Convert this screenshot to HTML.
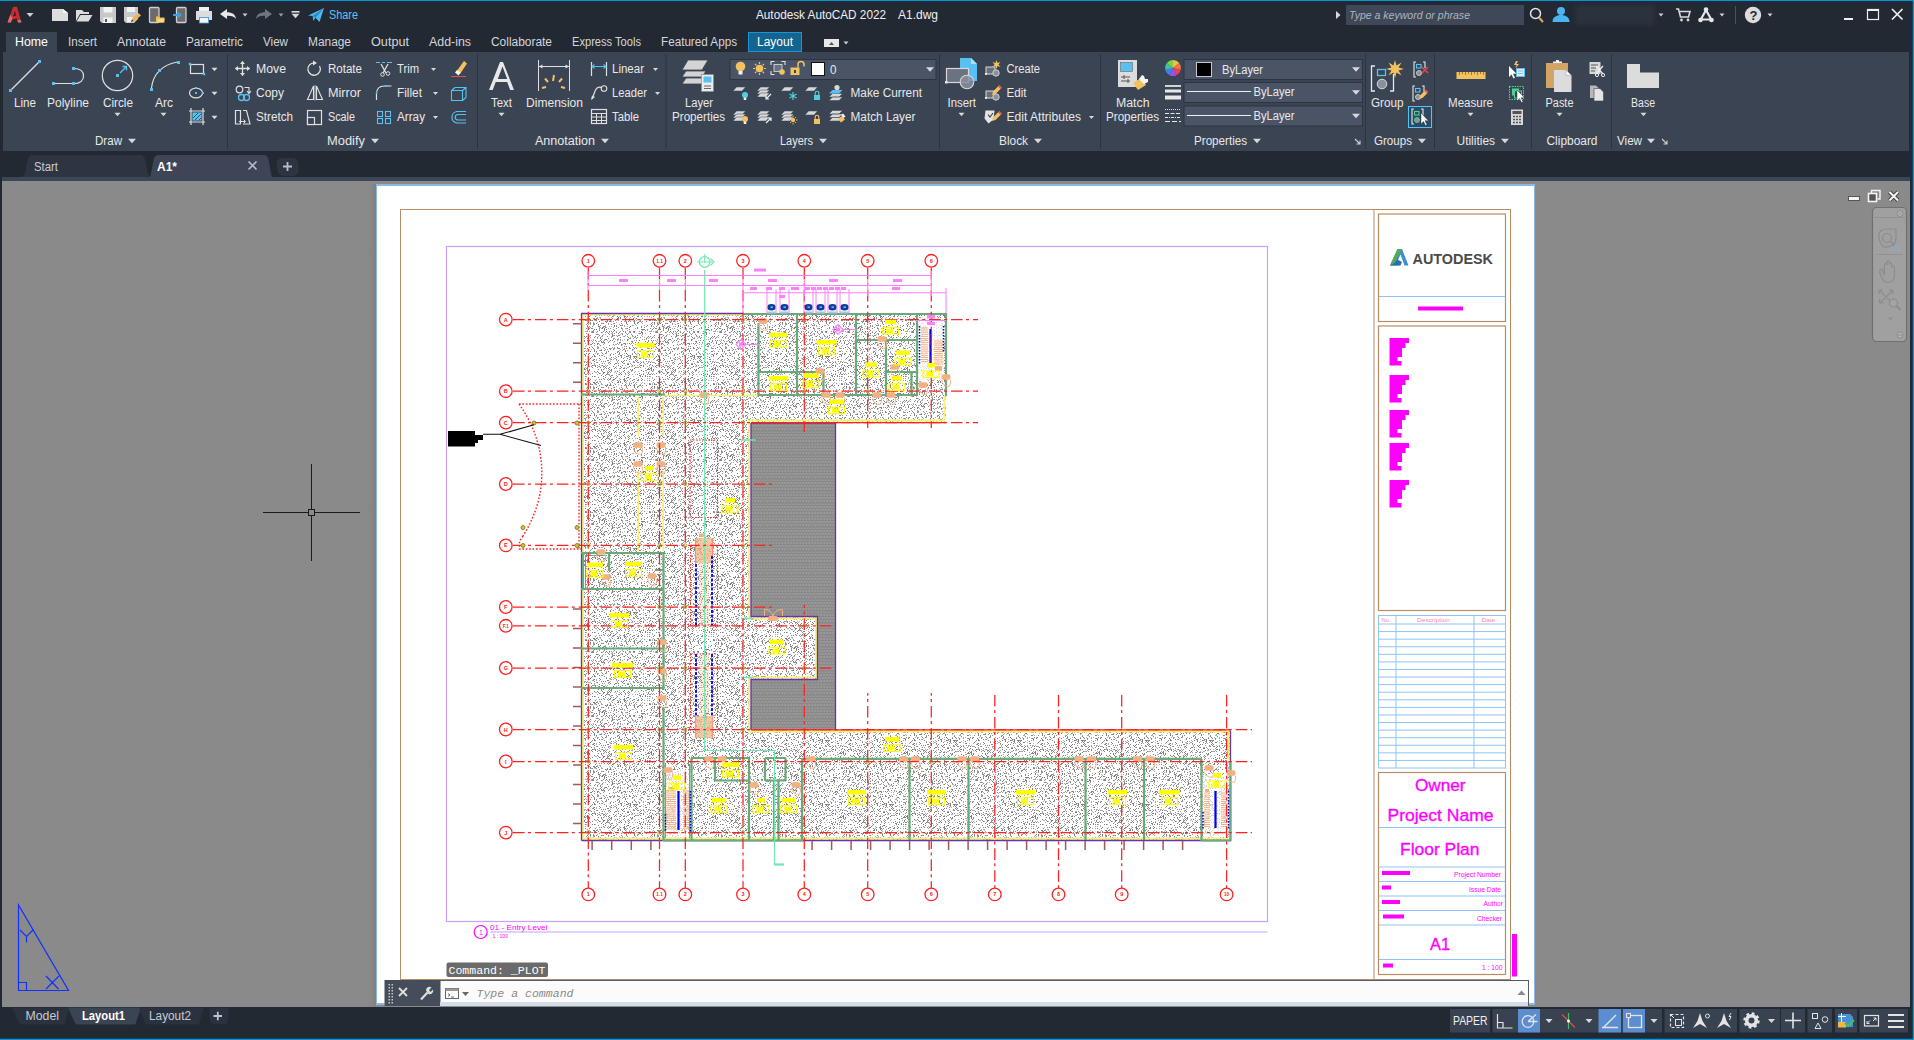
<!DOCTYPE html>
<html><head><meta charset="utf-8"><title>Autodesk AutoCAD 2022 A1.dwg</title>
<style>
*{box-sizing:border-box;margin:0;padding:0}
html,body{width:1914px;height:1040px;overflow:hidden;background:#222933;font-family:"Liberation Sans",sans-serif;font-size:12px;color:#e4e4e4}
.abs{position:absolute}
#root{position:relative;width:1914px;height:1040px;overflow:hidden;background:#222933}
#topline{left:0;top:0;width:1914px;height:1px;background:#0696d7}
#rightline{left:1913px;top:0;width:1px;height:1040px;background:#0696d7;box-shadow:-1px 0 0 rgba(6,150,215,0.25)}
#botline{left:0;top:1039px;width:1914px;height:1px;background:#0696d7;box-shadow:0 -1px 0 rgba(6,150,215,0.25)}
#ribbon{left:3px;top:52px;width:1906px;height:99px;background:#3b4453}
#hometab{left:6px;top:32px;width:51px;height:21px;background:#3b4453}
.tab{position:absolute;top:35px;font-size:12px;color:#d8d8d8;white-space:nowrap}
.t{position:absolute;white-space:nowrap;color:#e6e6e6;font-size:12px;line-height:14px}
.sep{position:absolute;top:54px;width:1px;height:95px;background:#2c3340}
#strip{left:2px;top:177px;width:1908px;height:4px;background:#3d4556}
#canvas{left:2px;top:181px;width:1908px;height:826px;background:#8a8a8a;overflow:hidden}
#status{left:0;top:1007px;width:1914px;height:31px;background:#222933}
svg{position:absolute;overflow:visible}
</style></head><body><div id="root">
<div class="abs" id="topline"></div>
<svg class="abs" style="left:0;top:0" width="1914" height="181" viewBox="0 0 1914 181" font-family="Liberation Sans, sans-serif">
<rect x="0" y="0" width="1914" height="181" fill="#222933"/>
<rect x="0" y="0" width="1914" height="1" fill="#0696d7"/>
<rect x="3" y="52" width="1906" height="99" fill="#3b4453"/>
<rect x="6" y="32" width="51" height="21" fill="#3b4453"/>
<rect x="2" y="177" width="1908" height="4" fill="#3d4556"/>
<path d="M7.500 22.500L13.200 6.800H17L21.400 22.500H18L16.900 18.600L12.100 19.400L10.900 22.500ZM13.100 16.300L16.200 15.700L15 10.800Z" fill="#cc2a2c" fill-rule="evenodd"/>
<path d="M7.500 22.500L10.300 14.800L12.600 18L10.900 22.500Z" fill="#e06a6a"/><path d="M18 22.500L17.300 20H20.700L21.400 22.500Z" fill="#e06a6a"/>
<path d="M26.5 13.0h7l-3.5 4z" fill="#cfcfcf"/>
<path d="M52 9h11l5 4v8H52z" fill="#dcdcdc"/><path d="M63 9v4h5z" fill="#f8f8f8"/>
<path d="M76 21V10h6l2 2h5v2H80l-4 7z" fill="#dcdcdc"/><path d="M80.5 15H92.5l-4 6.5H76.5z" fill="#dcdcdc"/>
<path d="M100 7h16v16H102l-2-2z" fill="#c8c8c8"/><rect x="103.5" y="7" width="9" height="5.5" fill="#f2f2f2"/><rect x="103.5" y="17.5" width="9" height="5.5" fill="#f2f2f2"/><rect x="105" y="19" width="2" height="3" fill="#555"/>
<path d="M124 7h14v12l-4 4H126l-2-2z" fill="#c8c8c8"/><rect x="127" y="7" width="8" height="5" fill="#f2f2f2"/><rect x="127" y="17" width="6" height="5" fill="#f2f2f2"/><path d="M131 22l1.5-4 6-5 2.5 2.5-6 5z" fill="#f0b450"/><path d="M131 22l1-2.5 1.5 1.5z" fill="#333"/>
<rect x="149.500" y="7.500" width="9.500" height="15" rx="1" fill="#6c6c6c" stroke="#cfcfcf" stroke-width="1.300"/><path d="M156 22.500v-6h3l1 1h4.500v5z" fill="#f0c060"/><path d="M157 22.500l1.500-3.500h6l-1 3.500z" fill="#f8d888"/>
<rect x="176.500" y="7.500" width="9.500" height="15" rx="1" fill="#6c6c6c" stroke="#cfcfcf" stroke-width="1.300"/><path d="M173 14h5v-2.5l4 3.5-4 3.5V16h-5z" fill="#3aa0e0"/>
<rect x="199" y="7" width="10" height="5" fill="#f0f0f0"/><path d="M196 11h16v9h-3v-3h-10v3h-3z" fill="#dcdcdc"/><rect x="199.5" y="17.5" width="9" height="5.5" fill="#f4f4f4" stroke="#4aa8e8" stroke-width="0.8"/>
<path d="M220 14l7-5v3.2c5 0 8.5 2 9 6.8-2-2.6-4.5-3.4-9-3.2V19z" fill="#e8e8e8"/>
<path d="M242.5 13.5h5l-2.5 3z" fill="#cfcfcf"/>
<path d="M272 14l-7-5v3.2c-5 0-8.5 2-9 6.8 2-2.6 4.5-3.4 9-3.2V19z" fill="#6e7582"/>
<path d="M278.5 13.5h5l-2.5 3z" fill="#9aa0aa"/>
<rect x="291.5" y="11" width="8" height="1.6" fill="#d8d8d8"/>
<path d="M291.5 13.75h8l-4.0 4.5z" fill="#d8d8d8"/>
<path d="M308 15.5L324 8l-4.5 14-4-4.2-2.2 3.2-.6-5z" fill="#4cb8ee"/><path d="M312.7 16L324 8l-8.5 9.8z" fill="#2a88c0"/>
<text x="329" y="19" font-size="12" fill="#5fc3f3" textLength="29" lengthAdjust="spacingAndGlyphs" >Share</text>
<text x="756" y="19" font-size="12" fill="#f0f0f0" textLength="130" lengthAdjust="spacingAndGlyphs" >Autodesk AutoCAD 2022</text>
<text x="898" y="19" font-size="12" fill="#f0f0f0" textLength="40" lengthAdjust="spacingAndGlyphs" >A1.dwg</text>
<path d="M1336 11l4.5 4-4.5 4z" fill="#d8d8d8"/>
<rect x="1346" y="5" width="178" height="20" fill="#3f4859"/>
<text x="1349" y="19" font-size="11" fill="#aeb4be" textLength="121" lengthAdjust="spacingAndGlyphs" font-style="italic">Type a keyword or phrase</text>
<circle cx="1535.5" cy="13.5" r="5" fill="none" stroke="#e6e6e6" stroke-width="1.5"/><path d="M1539 17.5l4 4.5" stroke="#e0a860" stroke-width="2"/>
<circle cx="1561" cy="11" r="4" fill="#4cb4f0"/><path d="M1552.500 22c0-5 4-7 8.500-7s8.500 2 8.500 7z" fill="#4cb4f0"/>
<defs><filter id="bl"><feGaussianBlur stdDeviation="2.5"/></filter></defs><rect x="1576" y="5" width="78" height="20" fill="#2c333d" filter="url(#bl)"/>
<path d="M1658.5 13.5h5l-2.5 3z" fill="#cfcfcf"/>
<path d="M1676 9h2.5l2 8h8l1.500-5.500h-10" fill="none" stroke="#d8d8d8" stroke-width="1.6"/><circle cx="1681.500" cy="20" r="1.4" fill="#d8d8d8"/><circle cx="1688" cy="20" r="1.4" fill="#d8d8d8"/>
<path d="M1706 10l-5.500 10M1706 10l5.500 10M1701 19.500h10" stroke="#e6e6e6" stroke-width="2.2" fill="none"/><circle cx="1706" cy="9.500" r="2.3" fill="#e6e6e6"/><circle cx="1700.500" cy="20" r="2.3" fill="#e6e6e6"/><circle cx="1711.500" cy="20" r="2.3" fill="#e6e6e6"/>
<path d="M1719.5 13.5h5l-2.5 3z" fill="#cfcfcf"/>
<rect x="1735" y="6" width="1" height="18" fill="#4a5160"/>
<circle cx="1753" cy="15" r="8.200" fill="#dcdcdc"/>
<text x="1749.6" y="19.5" font-size="13" fill="#222933" font-weight="bold">?</text>
<path d="M1767.5 13.5h5l-2.5 3z" fill="#cfcfcf"/>
<rect x="1844" y="18" width="9" height="2" fill="#f0f0f0"/>
<rect x="1867.500" y="9.500" width="11" height="10" fill="none" stroke="#f0f0f0" stroke-width="1.2"/><rect x="1867" y="9" width="12" height="2" fill="#f0f0f0"/>
<path d="M1892 9l10.500 10.500M1902.500 9L1892 19.500" stroke="#f0f0f0" stroke-width="1.7"/>
<text x="15" y="46" font-size="12" fill="#ffffff" textLength="33" lengthAdjust="spacingAndGlyphs" >Home</text>
<text x="68" y="46" font-size="12" fill="#d4d6da" textLength="29" lengthAdjust="spacingAndGlyphs" >Insert</text>
<text x="117" y="46" font-size="12" fill="#d4d6da" textLength="49" lengthAdjust="spacingAndGlyphs" >Annotate</text>
<text x="186" y="46" font-size="12" fill="#d4d6da" textLength="57" lengthAdjust="spacingAndGlyphs" >Parametric</text>
<text x="263" y="46" font-size="12" fill="#d4d6da" textLength="25" lengthAdjust="spacingAndGlyphs" >View</text>
<text x="308" y="46" font-size="12" fill="#d4d6da" textLength="43" lengthAdjust="spacingAndGlyphs" >Manage</text>
<text x="371" y="46" font-size="12" fill="#d4d6da" textLength="38" lengthAdjust="spacingAndGlyphs" >Output</text>
<text x="429" y="46" font-size="12" fill="#d4d6da" textLength="42" lengthAdjust="spacingAndGlyphs" >Add-ins</text>
<text x="491" y="46" font-size="12" fill="#d4d6da" textLength="61" lengthAdjust="spacingAndGlyphs" >Collaborate</text>
<text x="572" y="46" font-size="12" fill="#d4d6da" textLength="69" lengthAdjust="spacingAndGlyphs" >Express Tools</text>
<text x="661" y="46" font-size="12" fill="#d4d6da" textLength="76" lengthAdjust="spacingAndGlyphs" >Featured Apps</text>
<rect x="748.500" y="32.500" width="53" height="19" fill="#13648f" stroke="#1d94d6" stroke-width="1"/>
<text x="757" y="46" font-size="12" fill="#ffffff" textLength="36" lengthAdjust="spacingAndGlyphs" >Layout</text>
<rect x="824" y="39" width="15" height="8" fill="#e8e8e8"/><path d="M829 45l2.500-3 2.500 3z" fill="#555"/>
<path d="M843.5 41.5h5l-2.5 3z" fill="#cfcfcf"/>
<rect x="227.0" y="54" width="1" height="95" fill="#2d3441"/>
<rect x="477.0" y="54" width="1" height="95" fill="#2d3441"/>
<rect x="665.5" y="54" width="1" height="95" fill="#2d3441"/>
<rect x="939.0" y="54" width="1" height="95" fill="#2d3441"/>
<rect x="1100.0" y="54" width="1" height="95" fill="#2d3441"/>
<rect x="1365.0" y="54" width="1" height="95" fill="#2d3441"/>
<rect x="1434.0" y="54" width="1" height="95" fill="#2d3441"/>
<rect x="1531.0" y="54" width="1" height="95" fill="#2d3441"/>
<rect x="1611.0" y="54" width="1" height="95" fill="#2d3441"/>
<text x="95" y="145" font-size="12" fill="#e8e8e8" textLength="27" lengthAdjust="spacingAndGlyphs" >Draw</text>
<path d="M128.0 138.75h8l-4.0 4.5z" fill="#d8d8d8"/>
<text x="327" y="145" font-size="12" fill="#e8e8e8" textLength="38" lengthAdjust="spacingAndGlyphs" >Modify</text>
<path d="M371.0 138.75h8l-4.0 4.5z" fill="#d8d8d8"/>
<text x="535" y="145" font-size="12" fill="#e8e8e8" textLength="60" lengthAdjust="spacingAndGlyphs" >Annotation</text>
<path d="M601.0 138.75h8l-4.0 4.5z" fill="#d8d8d8"/>
<text x="780" y="145" font-size="12" fill="#e8e8e8" textLength="33" lengthAdjust="spacingAndGlyphs" >Layers</text>
<path d="M819.0 138.75h8l-4.0 4.5z" fill="#d8d8d8"/>
<text x="999" y="145" font-size="12" fill="#e8e8e8" textLength="29" lengthAdjust="spacingAndGlyphs" >Block</text>
<path d="M1034.0 138.75h8l-4.0 4.5z" fill="#d8d8d8"/>
<text x="1194" y="145" font-size="12" fill="#e8e8e8" textLength="53" lengthAdjust="spacingAndGlyphs" >Properties</text>
<path d="M1253.0 138.75h8l-4.0 4.5z" fill="#d8d8d8"/>
<text x="1374" y="145" font-size="12" fill="#e8e8e8" textLength="38" lengthAdjust="spacingAndGlyphs" >Groups</text>
<path d="M1418.0 138.75h8l-4.0 4.5z" fill="#d8d8d8"/>
<text x="1456.5" y="145" font-size="12" fill="#e8e8e8" textLength="38.5" lengthAdjust="spacingAndGlyphs" >Utilities</text>
<path d="M1501.0 138.75h8l-4.0 4.5z" fill="#d8d8d8"/>
<text x="1546.5" y="145" font-size="12" fill="#e8e8e8" textLength="51" lengthAdjust="spacingAndGlyphs" >Clipboard</text>
<text x="1617" y="145" font-size="12" fill="#e8e8e8" textLength="25" lengthAdjust="spacingAndGlyphs" >View</text>
<path d="M1647.0 138.75h8l-4.0 4.5z" fill="#d8d8d8"/>
<path d="M1355 139l5 5M1360 140.500v3.500h-3.500" stroke="#d0d0d0" stroke-width="1.1" fill="none"/>
<path d="M1662 139l5 5M1667 140.500v3.500h-3.500" stroke="#d0d0d0" stroke-width="1.1" fill="none"/>
<path d="M11 90L39 62" stroke="#e0e0e0" stroke-width="1.2"/>
<rect x="9.0" y="89.0" width="3" height="3" fill="#58c1f2"/>
<rect x="38.0" y="60.0" width="3" height="3" fill="#58c1f2"/>
<text x="14" y="107" font-size="12" fill="#e8e8e8" textLength="22" lengthAdjust="spacingAndGlyphs" >Line</text>
<path d="M54 83.500H73M74 68.500c6 0 9.500 3 9.500 7.500s-3.500 7.500-9.500 7.500" stroke="#e0e0e0" stroke-width="1.2" fill="none"/>
<rect x="52.0" y="82.0" width="3" height="3" fill="#58c1f2"/>
<rect x="72.0" y="82.0" width="3" height="3" fill="#58c1f2"/>
<rect x="72.0" y="67.0" width="3" height="3" fill="#58c1f2"/>
<text x="47" y="107" font-size="12" fill="#e8e8e8" textLength="42" lengthAdjust="spacingAndGlyphs" >Polyline</text>
<circle cx="117.500" cy="75.500" r="15.200" fill="none" stroke="#e0e0e0" stroke-width="1.2"/>
<rect x="116.0" y="74.0" width="3" height="3" fill="#58c1f2"/>
<path d="M120 73l6-6M122.500 66.500h4v4" stroke="#58c1f2" stroke-width="1.3" fill="none"/>
<text x="103" y="107" font-size="12" fill="#e8e8e8" textLength="30" lengthAdjust="spacingAndGlyphs" >Circle</text>
<path d="M114.5 112.75h6l-3.0 3.5z" fill="#d8d8d8"/>
<path d="M151.500 88c1.500-14 11-23.500 26-26" stroke="#e0e0e0" stroke-width="1.2" fill="none"/>
<rect x="150.0" y="88.0" width="3" height="3" fill="#58c1f2"/>
<rect x="158.0" y="69.0" width="3" height="3" fill="#58c1f2"/>
<rect x="177.0" y="61.0" width="3" height="3" fill="#58c1f2"/>
<text x="155" y="107" font-size="12" fill="#e8e8e8" textLength="18" lengthAdjust="spacingAndGlyphs" >Arc</text>
<path d="M160.5 112.75h6l-3.0 3.5z" fill="#d8d8d8"/>
<rect x="190.500" y="64.500" width="13" height="9" fill="none" stroke="#e0e0e0" stroke-width="1.2"/>
<rect x="188.8" y="62.8" width="2.4" height="2.4" fill="#58c1f2"/>
<rect x="202.8" y="72.8" width="2.4" height="2.4" fill="#58c1f2"/>
<path d="M211.5 67.75h6l-3.0 3.5z" fill="#d8d8d8"/>
<ellipse cx="196" cy="93" rx="6.500" ry="4.800" fill="none" stroke="#e0e0e0" stroke-width="1.2"/>
<rect x="195.0" y="87.0" width="2" height="2" fill="#58c1f2"/>
<rect x="195.0" y="92.0" width="2" height="2" fill="#58c1f2"/>
<rect x="202.0" y="92.0" width="2" height="2" fill="#58c1f2"/>
<path d="M211.5 91.75h6l-3.0 3.5z" fill="#d8d8d8"/>
<path d="M191 108v17M203 108v17M189 111h16M189 122h16" stroke="#e0e0e0" stroke-width="1.2"/><rect x="192.500" y="112.500" width="9" height="8" fill="#58c1f2"/><path d="M193 118l5-5M195 120l6-6M198.500 120.500l3-3" stroke="#3b4453" stroke-width="0.9"/>
<path d="M211.5 115.75h6l-3.0 3.5z" fill="#d8d8d8"/>
<path d="M242.500 61.500v14M235.500 68.500h14" stroke="#e0e0e0" stroke-width="1.3"/><path d="M240 64l2.500-3 2.500 3zM240 73l2.500 3 2.500-3zM238 66l-3 2.500 3 2.500zM247 66l3 2.500-3 2.500z" fill="#e0e0e0"/>
<text x="256" y="73" font-size="12" fill="#e8e8e8" textLength="30" lengthAdjust="spacingAndGlyphs" >Move</text>
<circle cx="239.500" cy="89.500" r="3.300" fill="none" stroke="#e0e0e0" stroke-width="1.2"/><circle cx="241.500" cy="97.500" r="3" fill="none" stroke="#58c1f2" stroke-width="1.3"/><circle cx="246.500" cy="97.500" r="3" fill="none" stroke="#58c1f2" stroke-width="1.3"/><path d="M244.500 87.500h4.500v5M247 91l2 2.500 2-2.500" stroke="#e0e0e0" stroke-width="1.1" fill="none"/>
<text x="256" y="97" font-size="12" fill="#e8e8e8" textLength="28" lengthAdjust="spacingAndGlyphs" >Copy</text>
<path d="M235.500 110.500h5v13.500h-5zM243 110.500h3.500l3.500 13.500h-7" stroke="#e0e0e0" stroke-width="1.2" fill="none"/><path d="M239 121.500h6M243.500 119.500l2 2-2 2" stroke="#e0e0e0" stroke-width="1" fill="none"/>
<text x="256" y="121" font-size="12" fill="#e8e8e8" textLength="37" lengthAdjust="spacingAndGlyphs" >Stretch</text>
<path d="M319.500 66a6.200 6.200 0 1 1-5.500-3.200" stroke="#e0e0e0" stroke-width="1.3" fill="none"/><path d="M313 60.500l4 2.500-4 2.500z" fill="#e0e0e0"/>
<text x="328" y="73" font-size="12" fill="#e8e8e8" textLength="34" lengthAdjust="spacingAndGlyphs" >Rotate</text>
<path d="M313.500 86l-6 13.500h6zM316.500 86l6 13.500h-6z" stroke="#e0e0e0" stroke-width="1.1" fill="none"/><path d="M315 85v15.500" stroke="#e0e0e0" stroke-width="0.8"/>
<text x="328" y="97" font-size="12" fill="#e8e8e8" textLength="33" lengthAdjust="spacingAndGlyphs" >Mirror</text>
<rect x="307.500" y="110.500" width="14" height="14" fill="none" stroke="#e0e0e0" stroke-width="1.2"/><rect x="307.500" y="117.500" width="7" height="7" fill="#3b4453" stroke="#e0e0e0" stroke-width="1.2"/>
<text x="328" y="121" font-size="12" fill="#e8e8e8" textLength="27" lengthAdjust="spacingAndGlyphs" >Scale</text>
<path d="M376 62.500h4M382 62.500h3M387 62.500h5" stroke="#58c1f2" stroke-width="1.2"/><path d="M381 64l5 9M388 64l-5 9" stroke="#e0e0e0" stroke-width="1.3"/><circle cx="382.500" cy="74.500" r="1.800" fill="none" stroke="#e0e0e0" stroke-width="1"/><circle cx="388" cy="73.500" r="1.800" fill="none" stroke="#e0e0e0" stroke-width="1"/>
<text x="397" y="73" font-size="12" fill="#e8e8e8" textLength="22" lengthAdjust="spacingAndGlyphs" >Trim</text>
<path d="M431.0 68.0h5l-2.5 3z" fill="#d8d8d8"/>
<path d="M376.500 100V94c0-5 3-8 8-8h7" stroke="#e0e0e0" stroke-width="1.2" fill="none"/><path d="M376.500 94v-2M384.500 86h3" stroke="#58c1f2" stroke-width="1.4"/>
<text x="397" y="97" font-size="12" fill="#e8e8e8" textLength="25" lengthAdjust="spacingAndGlyphs" >Fillet</text>
<path d="M433.0 92.0h5l-2.5 3z" fill="#d8d8d8"/>
<rect x="377.5" y="111.5" width="5" height="5" fill="none" stroke="#58c1f2" stroke-width="1.1"/>
<rect x="377.5" y="118.5" width="5" height="5" fill="none" stroke="#58c1f2" stroke-width="1.1"/>
<rect x="385.5" y="111.5" width="5" height="5" fill="none" stroke="#58c1f2" stroke-width="1.1"/>
<rect x="385.5" y="118.5" width="5" height="5" fill="none" stroke="#58c1f2" stroke-width="1.1"/>
<text x="397" y="121" font-size="12" fill="#e8e8e8" textLength="28" lengthAdjust="spacingAndGlyphs" >Array</text>
<path d="M433.0 116.0h5l-2.5 3z" fill="#d8d8d8"/>
<path d="M456 72l8-11 3 2.500-7 10.500z" fill="#f2c261"/><path d="M455 72.500l2-2.500 3.500 2.500-2 3z" fill="#f4f4f4"/><path d="M451 76.500h15" stroke="#e05050" stroke-width="1"/>
<path d="M451.500 90.500h11v10h-11zM455 87.500h11v10M451.500 90.500l3.500-3M462.500 90.500l3.500-3M462.500 100.500l3.500-3" stroke="#58c1f2" stroke-width="1.1" fill="none"/>
<path d="M466 111.500h-9a5.800 5.800 0 0 0 0 11.500h9M466 114.500h-8.500a2.800 2.800 0 0 0 0 5.500h8.500" stroke="#58c1f2" stroke-width="1.2" fill="none"/>
<path d="M489 90l11-28h3l11 28h-3.800l-3-8h-11.500l-3 8zM497.800 79h9.400l-4.700-12.500z" fill="#e8e8e8"/>
<text x="491" y="107" font-size="12" fill="#e8e8e8" textLength="21" lengthAdjust="spacingAndGlyphs" >Text</text>
<path d="M498.5 112.75h6l-3.0 3.5z" fill="#d8d8d8"/>
<path d="M538.500 60v31M569.500 60v31M539 66.500h30" stroke="#e0e0e0" stroke-width="1"/><path d="M539 66.500l3.500-2v4zM569 66.500l-3.500-2v4z" fill="#e0e0e0"/>
<path d="M553 81l1-6M548 82l-3-3.500M559 82l3-3.500M546 87l-4 1M561 87l4 1" stroke="#f2c261" stroke-width="2"/>
<text x="526" y="107" font-size="12" fill="#e8e8e8" textLength="57" lengthAdjust="spacingAndGlyphs" >Dimension</text>
<path d="M591.500 62v14M606.500 62v14" stroke="#e0e0e0" stroke-width="1.2"/><path d="M592 66.500h14M594.500 64.500l-2.500 2 2.500 2M603.500 64.500l2.500 2-2.500 2" stroke="#58c1f2" stroke-width="1.1" fill="none"/>
<text x="612" y="73" font-size="12" fill="#e8e8e8" textLength="32" lengthAdjust="spacingAndGlyphs" >Linear</text>
<path d="M653.0 68.0h5l-2.5 3z" fill="#d8d8d8"/>
<path d="M592 99l3.500-9c1.500-3 4-3.500 6.500-2" stroke="#e0e0e0" stroke-width="1.200" fill="none"/><path d="M591 100l1-4.500 3 1.500z" fill="#e0e0e0"/><circle cx="604" cy="88.500" r="2.800" fill="none" stroke="#e0e0e0" stroke-width="1.100"/>
<text x="612" y="97" font-size="12" fill="#e8e8e8" textLength="35" lengthAdjust="spacingAndGlyphs" >Leader</text>
<path d="M655.0 92.0h5l-2.5 3z" fill="#d8d8d8"/>
<rect x="591.500" y="109.500" width="15" height="14" fill="none" stroke="#e0e0e0" stroke-width="1.200"/><path d="M591.500 113.500h15M591.500 117h15M591.500 120.500h15M596.500 113.500v10M601.500 113.500v10" stroke="#e0e0e0" stroke-width="1"/>
<text x="612" y="121" font-size="12" fill="#e8e8e8" textLength="27" lengthAdjust="spacingAndGlyphs" >Table</text>
<path d="M682 70l6-10h20l-6 10zM682 77l4-6h20l-4 6zM682 84l4-6h20l-4 6z" fill="#d4d4d4" stroke="#3b4453" stroke-width="0.800"/>
<rect x="701.500" y="74.500" width="12" height="17" fill="#ececec" stroke="#888" stroke-width="0.600"/><rect x="703.500" y="76.500" width="8" height="6" fill="#58c1f2"/><path d="M704 86h7M704 88.500h7" stroke="#444" stroke-width="0.800"/>
<text x="685" y="107" font-size="12" fill="#e8e8e8" textLength="28" lengthAdjust="spacingAndGlyphs" >Layer</text>
<text x="672" y="121" font-size="12" fill="#e8e8e8" textLength="53" lengthAdjust="spacingAndGlyphs" >Properties</text>
<rect x="730" y="59.500" width="206" height="20" fill="#4b5467" stroke="#2d3441" stroke-width="1"/>
<circle cx="740.500" cy="66.500" r="4.800" fill="#f2c261"/><rect x="738.500" y="71" width="4" height="3.500" fill="#f0f0f0"/>
<circle cx="759.500" cy="68.500" r="3.800" fill="#f2c261"/><path d="M759.500 62v2M759.500 73v2M753 68.500h2M764 68.500h2M755 64l1.400 1.400M762.600 71.600l1.400 1.400M764 64l-1.400 1.400M756.400 71.600l-1.400 1.400" stroke="#f2c261" stroke-width="1.200"/>
<path d="M771 65v-3.500h3.500M781.500 61.500h3.500v3.500M771 71v3.500h3.500" stroke="#e0e0e0" stroke-width="1.100" fill="none"/><rect x="774" y="64.500" width="8" height="7" fill="#6a7282" stroke="#e0e0e0" stroke-width="0.800"/><circle cx="782" cy="72" r="2.800" fill="#f2c261"/>
<rect x="790.500" y="67.500" width="9" height="7.500" fill="#f2c261"/><path d="M798 67.500v-3a3 3 0 0 1 6 0v2" stroke="#f2c261" stroke-width="1.500" fill="none"/><rect x="794" y="70" width="2" height="3" fill="#3b4453"/>
<rect x="811.500" y="62.500" width="13" height="13" fill="#fff" stroke="#111" stroke-width="1"/>
<text x="830" y="73.5" font-size="12" fill="#e8e8e8" textLength="6.5" lengthAdjust="spacingAndGlyphs" >0</text>
<path d="M926.0 67.25h8l-4.0 4.5z" fill="#d8d8d8"/>
<path d="M733 91l3.500-4h9l-3.500 4z" fill="#d8d8d8" stroke="#3b4453" stroke-width="0.500"/>
<circle cx="745" cy="95" r="3" fill="#4fd0e0"/><rect x="743.7" y="97.5" width="2.600" height="2.500" fill="#f0f0f0"/>
<path d="M757 91l3.500-4h9l-3.500 4z" fill="#d8d8d8" stroke="#3b4453" stroke-width="0.500"/>
<path d="M757 94l3.500-4h9l-3.500 4z" fill="#d8d8d8" stroke="#3b4453" stroke-width="0.500"/>
<path d="M757 97l3.500-4h9l-3.500 4z" fill="#d8d8d8" stroke="#3b4453" stroke-width="0.500"/>
<path d="M771 94l-5 5M766 96v3h3" stroke="#f0f0f0" stroke-width="1.200" fill="none"/>
<path d="M781 91l3.500-4h9l-3.500 4z" fill="#d8d8d8" stroke="#3b4453" stroke-width="0.500"/>
<path d="M793 92v8M789.5 94l7 4M789.5 98l7-4" stroke="#4fd0e0" stroke-width="1.200"/>
<path d="M805 91l3.500-4h9l-3.500 4z" fill="#d8d8d8" stroke="#3b4453" stroke-width="0.500"/>
<rect x="814" y="95" width="6" height="5" fill="#4fd0e0"/><path d="M815.2 95v-2a1.800 1.800 0 0 1 3.600 0v2" stroke="#4fd0e0" stroke-width="1.100" fill="none"/>
<path d="M829 97l3.500-3.500h10l-3.500 3.500zM829 100.500l3.500-3.500h10l-3.500 3.500z" fill="#d8d8d8" stroke="#3b4453" stroke-width="0.500"/><path d="M829 93.500l3.500-3.500h10l-3.500 3.500z" fill="#58c1f2"/><circle cx="837" cy="87.500" r="2.600" fill="#d8d8d8"/>
<text x="850.5" y="97" font-size="12" fill="#e8e8e8" textLength="71.5" lengthAdjust="spacingAndGlyphs" >Make Current</text>
<path d="M733 115l3.500-4h9l-3.500 4z" fill="#d8d8d8" stroke="#3b4453" stroke-width="0.500"/>
<path d="M733 118l3.500-4h9l-3.500 4z" fill="#d8d8d8" stroke="#3b4453" stroke-width="0.500"/>
<path d="M733 121l3.500-4h9l-3.500 4z" fill="#d8d8d8" stroke="#3b4453" stroke-width="0.500"/>
<circle cx="745" cy="119" r="3" fill="#f2c261"/><rect x="743.7" y="121.5" width="2.600" height="2.500" fill="#f0f0f0"/>
<path d="M757 115l3.500-4h9l-3.500 4z" fill="#d8d8d8" stroke="#3b4453" stroke-width="0.500"/>
<path d="M757 118l3.500-4h9l-3.500 4z" fill="#d8d8d8" stroke="#3b4453" stroke-width="0.500"/>
<path d="M757 121l3.500-4h9l-3.500 4z" fill="#d8d8d8" stroke="#3b4453" stroke-width="0.500"/>
<path d="M766 123l5-5M768 118h3v3" stroke="#f0f0f0" stroke-width="1.200" fill="none"/>
<path d="M781 115l3.500-4h9l-3.500 4z" fill="#d8d8d8" stroke="#3b4453" stroke-width="0.500"/>
<path d="M781 118l3.500-4h9l-3.500 4z" fill="#d8d8d8" stroke="#3b4453" stroke-width="0.500"/>
<path d="M781 121l3.500-4h9l-3.500 4z" fill="#d8d8d8" stroke="#3b4453" stroke-width="0.500"/>
<circle cx="793" cy="120" r="2.200" fill="#f2c261"/><path d="M793 115.5v1.500M793 123v1.500M788.5 120h1.500M796 120h1.500M790 117l1 1M795 122l1 1M796 117l-1 1M791 122l-1 1" stroke="#f2c261" stroke-width="0.900"/>
<path d="M805 115l3.500-4h9l-3.500 4z" fill="#d8d8d8" stroke="#3b4453" stroke-width="0.500"/>
<rect x="814" y="119" width="6" height="5" fill="#f2c261"/><path d="M815.2 119v-2a1.800 1.800 0 0 1 3.600 0v2" stroke="#f2c261" stroke-width="1.100" fill="none"/>
<path d="M829 114l3.500-3.500h10l-3.500 3.500zM829 117.500l3.500-3.500h10l-3.500 3.500zM829 121l3.500-3.500h10l-3.500 3.500z" fill="#d8d8d8" stroke="#3b4453" stroke-width="0.500"/><path d="M838 119l4-3 3 3.500-4 3z" fill="#f2c261"/><path d="M841 115l2-1.500 2.500 3-2 1.500z" fill="#f4f4f4"/>
<text x="850.5" y="121" font-size="12" fill="#e8e8e8" textLength="65" lengthAdjust="spacingAndGlyphs" >Match Layer</text>
<path d="M960 58h11l6 6v17h-17z" fill="#58c1f2"/><path d="M971 58v6h6z" fill="#a8def8"/><rect x="946.500" y="68.500" width="22" height="14" fill="#6b7382" stroke="#d8d8d8" stroke-width="1.200"/><circle cx="967" cy="82" r="6.800" fill="#8a919d" fill-opacity="0.850" stroke="#d8d8d8" stroke-width="1.100"/><rect x="945" y="81" width="2.500" height="2.500" fill="#e8e8e8"/>
<text x="947.5" y="107" font-size="12" fill="#e8e8e8" textLength="28.5" lengthAdjust="spacingAndGlyphs" >Insert</text>
<path d="M958.5 112.75h6l-3.0 3.5z" fill="#d8d8d8"/>
<rect x="986" y="67" width="9" height="7" fill="#69717f" stroke="#d8d8d8" stroke-width="1"/><circle cx="996" cy="73" r="3.200" fill="#8a919d" stroke="#d8d8d8" stroke-width="0.900"/><rect x="985" y="73" width="2" height="2" fill="#e8e8e8"/>
<path d="M996.500 60l1 3 3-1-2 2.500 2 2.500-3-1-1 3-1-3-3 1 2-2.500-2-2.500 3 1z" fill="#f2c261"/>
<text x="1006.5" y="73" font-size="12" fill="#e8e8e8" textLength="33.5" lengthAdjust="spacingAndGlyphs" >Create</text>
<rect x="986" y="91" width="9" height="7" fill="#69717f" stroke="#d8d8d8" stroke-width="1"/><circle cx="996" cy="97" r="3.200" fill="#8a919d" stroke="#d8d8d8" stroke-width="0.900"/><rect x="985" y="97" width="2" height="2" fill="#e8e8e8"/>
<path d="M992 95l1-3.500 6-6 2.500 2.500-6 6z" fill="#f2c261"/><path d="M998 86.500l1.500-1.500 2.500 2.500-1.500 1.500z" fill="#e05858"/>
<text x="1006.5" y="97" font-size="12" fill="#e8e8e8" textLength="20" lengthAdjust="spacingAndGlyphs" >Edit</text>
<path d="M985.500 110.500h9l-1 9-5 4-4-5z" fill="#e4e4e4"/><path d="M988 114.500l2 2.500 3-4" stroke="#3b4453" stroke-width="1.200" fill="none"/><path d="M992 121l1-3.500 6-6 2.500 2.500-6 6z" fill="#f2c261"/><path d="M998 112.500l1.500-1.500 2.500 2.500-1.500 1.500z" fill="#e05858"/>
<text x="1006.5" y="121" font-size="12" fill="#e8e8e8" textLength="74.5" lengthAdjust="spacingAndGlyphs" >Edit Attributes</text>
<path d="M1089.0 116.0h5l-2.5 3z" fill="#d8d8d8"/>
<rect x="1118" y="60" width="19" height="27" fill="#dcdcdc"/><rect x="1120.500" y="62.500" width="12" height="9" fill="#58c1f2" stroke="#555" stroke-width="0.500"/><path d="M1121 77h9M1121 81h9M1124 75v4M1128 79v4" stroke="#555" stroke-width="1"/><path d="M1133 83l8-5 5 7-8 5z" fill="#f2c261"/><path d="M1139 79l3-4 2 1 1 3 3 0 0 3-4 2z" fill="#f4f4f4"/>
<text x="1116" y="107" font-size="12" fill="#e8e8e8" textLength="33.5" lengthAdjust="spacingAndGlyphs" >Match</text>
<text x="1106" y="121" font-size="12" fill="#e8e8e8" textLength="53" lengthAdjust="spacingAndGlyphs" >Properties</text>
<path d="M1173 68L1173.00 60.00A8 8 0 0 1 1179.25 63.01z" fill="#f0c040"/>
<path d="M1173 68L1179.25 63.01A8 8 0 0 1 1180.80 69.78z" fill="#f07830"/>
<path d="M1173 68L1180.80 69.78A8 8 0 0 1 1176.47 75.21z" fill="#e84060"/>
<path d="M1173 68L1176.47 75.21A8 8 0 0 1 1169.53 75.21z" fill="#a050e0"/>
<path d="M1173 68L1169.53 75.21A8 8 0 0 1 1165.20 69.78z" fill="#4080f0"/>
<path d="M1173 68L1165.20 69.78A8 8 0 0 1 1166.75 63.01z" fill="#40c0a0"/>
<path d="M1173 68L1166.75 63.01A8 8 0 0 1 1173.00 60.00z" fill="#80d040"/>
<rect x="1184" y="59.5" width="178.500" height="20" fill="#4b5467" stroke="#2d3441" stroke-width="1"/>
<rect x="1184" y="82.5" width="178.500" height="20" fill="#4b5467" stroke="#2d3441" stroke-width="1"/>
<rect x="1184" y="106" width="178.500" height="20" fill="#4b5467" stroke="#2d3441" stroke-width="1"/>
<rect x="1196.500" y="62.500" width="15" height="14" fill="#000" stroke="#c8c8c8" stroke-width="1"/>
<text x="1222" y="73.5" font-size="12" fill="#e8e8e8" textLength="41" lengthAdjust="spacingAndGlyphs" >ByLayer</text>
<path d="M1187 91.5h64" stroke="#f0f0f0" stroke-width="1"/>
<text x="1253.5" y="96" font-size="12" fill="#e8e8e8" textLength="41" lengthAdjust="spacingAndGlyphs" >ByLayer</text>
<path d="M1187 115.5h64" stroke="#f0f0f0" stroke-width="1"/>
<text x="1253.5" y="120" font-size="12" fill="#e8e8e8" textLength="41" lengthAdjust="spacingAndGlyphs" >ByLayer</text>
<path d="M1352.0 67.25h8l-4.0 4.5z" fill="#d8d8d8"/>
<path d="M1352.0 90.25h8l-4.0 4.5z" fill="#d8d8d8"/>
<path d="M1352.0 113.75h8l-4.0 4.5z" fill="#d8d8d8"/>
<path d="M1165 86h16M1165 90.500h16M1165 96.500h16" stroke="#e8e8e8"/><path d="M1165 86h16" stroke="#e8e8e8" stroke-width="1.500"/><path d="M1165 91h16" stroke="#e8e8e8" stroke-width="3"/><path d="M1165 97.500h16" stroke="#e8e8e8" stroke-width="4"/>
<path d="M1165 109.500h16" stroke="#e8e8e8" stroke-width="1" stroke-dasharray="1 1"/><path d="M1165 113.500h16" stroke="#e8e8e8" stroke-width="1.200" stroke-dasharray="4 1.500"/><path d="M1165 117.500h16" stroke="#e8e8e8" stroke-width="1.200" stroke-dasharray="3 1 1 1"/><path d="M1165 121.500h16" stroke="#e8e8e8" stroke-width="1.200" stroke-dasharray="5 2"/>
<path d="M1375 66h-3.500v25h3.500M1390 91h3.500v-17" stroke="#e8e8e8" stroke-width="1.300" fill="none"/><rect x="1377.500" y="69.500" width="8" height="6" fill="#3b4453" stroke="#58c1f2" stroke-width="1.300"/><circle cx="1382" cy="84" r="4.800" fill="#8a919d" stroke="#d8d8d8" stroke-width="1"/>
<path d="M1395 60l1.500 5.500 5-3-3 5 5.500 1.500-5.500 1.500 3 5-5-3-1.500 5.500-1.500-5.500-5 3 3-5-5.500-1.500 5.500-1.500-3-5 5 3z" fill="#f2c261"/>
<text x="1371" y="107" font-size="12" fill="#e8e8e8" textLength="32.5" lengthAdjust="spacingAndGlyphs" >Group</text>
<path d="M1416 62h-2v15h2M1423 62h2v6" stroke="#e8e8e8" stroke-width="1.100" fill="none"/><rect x="1416.5" y="64.5" width="4.500" height="3.500" fill="none" stroke="#58c1f2" stroke-width="1.100"/><circle cx="1419" cy="73" r="2.500" fill="#8a919d" stroke="#d0d0d0" stroke-width="0.900"/>
<path d="M1422 67l6 6M1428 67l-6 6" stroke="#e04848" stroke-width="1.600"/>
<path d="M1415 86h-2v15h2M1422 86h2v6" stroke="#e8e8e8" stroke-width="1.100" fill="none"/><rect x="1415.5" y="88.5" width="4.500" height="3.500" fill="none" stroke="#58c1f2" stroke-width="1.100"/><circle cx="1418" cy="97" r="2.500" fill="#8a919d" stroke="#d0d0d0" stroke-width="0.900"/>
<path d="M1419 99l1-3.500 5-5 2.500 2.500-5 5z" fill="#f2c261"/><path d="M1424.500 91l1.500-1.500 2.500 2.500-1.500 1.500z" fill="#e05858"/>
<rect x="1408.500" y="106.500" width="23" height="21" fill="#2c4a63" stroke="#58c1f2" stroke-width="1"/>
<path d="M1414 109h-2v15h2M1421 109h2v6" stroke="#e8e8e8" stroke-width="1.100" fill="none"/><rect x="1414.5" y="111.5" width="4.500" height="3.500" fill="none" stroke="#50d090" stroke-width="1.100"/><circle cx="1417" cy="120" r="2.500" fill="#8a919d" stroke="#50d090" stroke-width="0.900"/>
<path d="M1421 113v11l2.500-2.500 2 4 1.500-.8-2-4h3.500z" fill="#fff" stroke="#222" stroke-width="0.400"/>
<rect x="1456.500" y="72" width="29" height="7" fill="#f2c261"/><path d="M1459.500 72v3M1462.500 72v2M1465.500 72v3M1468.500 72v2M1471.500 72v3M1474.500 72v2M1477.500 72v3M1480.500 72v2M1483.500 72v3" stroke="#8a6a20" stroke-width="0.800"/>
<text x="1448" y="107" font-size="12" fill="#e8e8e8" textLength="45" lengthAdjust="spacingAndGlyphs" >Measure</text>
<path d="M1467.5 112.75h6l-3.0 3.5z" fill="#d8d8d8"/>
<path d="M1509 66v11l2.500-2.500 2 4 1.500-.8-2-4h3.500z" fill="#fff"/><rect x="1516.500" y="68.500" width="8" height="8" fill="#e8e8e8" stroke="#58c1f2" stroke-width="1"/><path d="M1518 71h5M1518 73.500h5" stroke="#58c1f2" stroke-width="0.800"/><path d="M1516 61l-2 4h2.500l-1 3.500 3.500-4.500h-2.500l1.500-3z" fill="#f2c261"/>
<rect x="1509.500" y="86.500" width="14" height="13" fill="none" stroke="#50d090" stroke-width="1.100" stroke-dasharray="1.500 1"/><rect x="1512" y="88.500" width="7" height="7" fill="#50d090"/><rect x="1514.500" y="91" width="7" height="7" fill="#3b4453" stroke="#50d090" stroke-width="1"/><path d="M1517 90v11l2.500-2.500 2 4 1.500-.8-2-4h3.500z" fill="#fff" stroke="#222" stroke-width="0.400"/>
<rect x="1511" y="109.500" width="12" height="15.500" fill="#d8d8d8"/><rect x="1512.500" y="111" width="9" height="3" fill="#555"/><path d="M1513 116.500h8M1513 119.500h8M1513 122.500h8" stroke="#555" stroke-width="1.600" stroke-dasharray="2 1"/>
<path d="M1546 63h22v25h-22z" fill="#d2a566"/><path d="M1553 63v-1.500h3v-1.500h3v1.500h3v1.500z" fill="#f0f0f0"/><path d="M1554 70h12l5.500 5.500v16.500h-17.500z" fill="#dcdcdc"/><path d="M1566 70v5.500h5.500z" fill="#f8f8f8" stroke="#888" stroke-width="0.400"/>
<text x="1545.5" y="107" font-size="12" fill="#e8e8e8" textLength="28" lengthAdjust="spacingAndGlyphs" >Paste</text>
<path d="M1556.5 112.75h6l-3.0 3.5z" fill="#d8d8d8"/>
<rect x="1589.500" y="62" width="11" height="12" fill="#d8d8d8"/><path d="M1591 65h7M1591 68h5M1591 71h4" stroke="#555" stroke-width="1"/><path d="M1596 66l7 8M1603 66l-7 8" stroke="#f0f0f0" stroke-width="1.200"/><circle cx="1597" cy="75" r="1.600" fill="none" stroke="#f0f0f0" stroke-width="1"/><circle cx="1603" cy="75" r="1.600" fill="none" stroke="#f0f0f0" stroke-width="1"/>
<path d="M1590 85.500h6l3 3v9.500h-9z" fill="#b8b8b8"/><path d="M1594 88.500h6l3.500 3.500v9h-9.500z" fill="#e4e4e4" stroke="#3b4453" stroke-width="0.600"/>
<path d="M1627 64h13v8.500h19v15.500h-32z" fill="#dcdcdc"/>
<text x="1631" y="107" font-size="12" fill="#e8e8e8" textLength="24" lengthAdjust="spacingAndGlyphs" >Base</text>
<path d="M1640.5 112.75h6l-3.0 3.5z" fill="#d8d8d8"/>
</svg>
<svg class="abs" style="left:0;top:0" width="1914" height="1040" viewBox="0 0 1914 1040" font-family="Liberation Sans, sans-serif">
<defs><clipPath id="cv"><rect x="2" y="181" width="1908" height="826"/></clipPath></defs>
<g clip-path="url(#cv)">
<rect x="2" y="181" width="1908" height="826" fill="#8a8a8a"/>
<defs><linearGradient id="lsh" x1="0" x2="1" y1="0" y2="0"><stop offset="0" stop-color="#8a8a8a"/><stop offset="0.6" stop-color="#878685"/><stop offset="1" stop-color="#7c8084"/></linearGradient></defs><rect x="367" y="184" width="9" height="823" fill="url(#lsh)"/>
<rect x="376" y="184" width="1159" height="821" fill="#ffffff"/>
<rect x="376" y="184" width="1159" height="2" fill="#8db7e4"/><rect x="376" y="184" width="1" height="821" fill="#8db7e4"/><rect x="1534" y="184" width="1" height="821" fill="#8db7e4"/><rect x="376" y="1003" width="1159" height="2" fill="#8db7e4"/>
<rect x="400.500" y="209.500" width="1110" height="770" fill="none" stroke="#b88a66" stroke-width="1"/>
<path d="M1374 209.500V979.500" stroke="#b88a66" stroke-width="1"/>
<rect x="1378.500" y="214" width="127" height="107.5" fill="none" stroke="#b88a66" stroke-width="1.200"/>
<rect x="1378.500" y="326" width="127" height="284.5" fill="none" stroke="#b88a66" stroke-width="1.200"/>
<rect x="1378.500" y="772.5" width="127" height="202.0" fill="none" stroke="#b88a66" stroke-width="1.200"/>
<rect x="1378.500" y="615.500" width="127" height="152.500" fill="none" stroke="#8fc4f4" stroke-width="1"/>
<path d="M1396 615.500v152.500M1474 615.500v152.500" stroke="#8fc4f4" stroke-width="1"/>
<path d="M1378.500 624.00h127" stroke="#8fc4f4" stroke-width="1"/>
<path d="M1378.500 631.58h127" stroke="#8fc4f4" stroke-width="1"/>
<path d="M1378.500 639.16h127" stroke="#8fc4f4" stroke-width="1"/>
<path d="M1378.500 646.74h127" stroke="#8fc4f4" stroke-width="1"/>
<path d="M1378.500 654.32h127" stroke="#8fc4f4" stroke-width="1"/>
<path d="M1378.500 661.90h127" stroke="#8fc4f4" stroke-width="1"/>
<path d="M1378.500 669.48h127" stroke="#8fc4f4" stroke-width="1"/>
<path d="M1378.500 677.06h127" stroke="#8fc4f4" stroke-width="1"/>
<path d="M1378.500 684.64h127" stroke="#8fc4f4" stroke-width="1"/>
<path d="M1378.500 692.22h127" stroke="#8fc4f4" stroke-width="1"/>
<path d="M1378.500 699.80h127" stroke="#8fc4f4" stroke-width="1"/>
<path d="M1378.500 707.38h127" stroke="#8fc4f4" stroke-width="1"/>
<path d="M1378.500 714.96h127" stroke="#8fc4f4" stroke-width="1"/>
<path d="M1378.500 722.54h127" stroke="#8fc4f4" stroke-width="1"/>
<path d="M1378.500 730.12h127" stroke="#8fc4f4" stroke-width="1"/>
<path d="M1378.500 737.70h127" stroke="#8fc4f4" stroke-width="1"/>
<path d="M1378.500 745.28h127" stroke="#8fc4f4" stroke-width="1"/>
<path d="M1378.500 752.86h127" stroke="#8fc4f4" stroke-width="1"/>
<path d="M1378.500 760.44h127" stroke="#8fc4f4" stroke-width="1"/>
<text x="1381.5" y="622" font-size="6" fill="#ff7fbf" textLength="9" lengthAdjust="spacingAndGlyphs" >No.</text>
<text x="1417" y="622" font-size="6" fill="#ff7fbf" textLength="33" lengthAdjust="spacingAndGlyphs" >Description</text>
<text x="1481.5" y="622" font-size="6" fill="#ff7fbf" textLength="14" lengthAdjust="spacingAndGlyphs" >Date</text>
<path d="M1379 296.5h126" stroke="#8fc4f4" stroke-width="1.200"/>
<path d="M1379 827.5h126" stroke="#8fc4f4" stroke-width="1.200"/>
<path d="M1379 867h126" stroke="#8fc4f4" stroke-width="1.200"/>
<path d="M1379 881.5h126" stroke="#8fc4f4" stroke-width="1.200"/>
<path d="M1379 896h126" stroke="#8fc4f4" stroke-width="1.200"/>
<path d="M1379 910.5h126" stroke="#8fc4f4" stroke-width="1.200"/>
<path d="M1379 925h126" stroke="#8fc4f4" stroke-width="1.200"/>
<path d="M1379 959.5h126" stroke="#8fc4f4" stroke-width="1.200"/>
<text x="1415" y="791" font-size="17" fill="#ff00ff" textLength="50.5" lengthAdjust="spacingAndGlyphs" stroke="#ff00ff" stroke-width="0.350">Owner</text>
<text x="1387.5" y="821" font-size="17" fill="#ff00ff" textLength="106" lengthAdjust="spacingAndGlyphs" stroke="#ff00ff" stroke-width="0.350">Project Name</text>
<text x="1400" y="855" font-size="17" fill="#ff00ff" textLength="79.5" lengthAdjust="spacingAndGlyphs" stroke="#ff00ff" stroke-width="0.350">Floor Plan</text>
<text x="1430" y="950" font-size="17" fill="#ff00ff" textLength="20" lengthAdjust="spacingAndGlyphs" stroke="#ff00ff" stroke-width="0.350">A1</text>
<text x="1454" y="877" font-size="7" fill="#ff00ff" textLength="47" lengthAdjust="spacingAndGlyphs" >Project Number</text>
<text x="1469" y="891.5" font-size="7" fill="#ff00ff" textLength="32" lengthAdjust="spacingAndGlyphs" >Issue Date</text>
<text x="1483.5" y="906" font-size="7" fill="#ff00ff" textLength="19.5" lengthAdjust="spacingAndGlyphs" >Author</text>
<text x="1477" y="920.5" font-size="7" fill="#ff00ff" textLength="25" lengthAdjust="spacingAndGlyphs" >Checker</text>
<text x="1482.0" y="970" font-size="7" fill="#ff00ff" textLength="20.5" lengthAdjust="spacingAndGlyphs" >1 : 100</text>
<rect x="1382" y="871" width="28" height="4" fill="#ff00ff"/>
<rect x="1382" y="885.5" width="9" height="4" fill="#ff00ff"/>
<rect x="1382" y="900" width="18" height="4" fill="#ff00ff"/>
<rect x="1383" y="914.5" width="21" height="4" fill="#ff00ff"/>
<rect x="1383" y="963.5" width="10" height="4" fill="#ff00ff"/>
<rect x="1418" y="306.500" width="45" height="4" fill="#ff00ff"/>
<rect x="1512" y="934" width="5" height="42.500" fill="#ff00ff"/>
<path d="M1389.500 338h19.500v5h-3.500v5h-3.500v9h-4.500v4h4v4.500h-12z" fill="#ff00ff"/>
<path d="M1389.500 375h19.500v5h-3.500v5h-3.500v9h-4.500v4h4v4.500h-12z" fill="#ff00ff"/>
<path d="M1389.500 410h19.500v5h-3.500v5h-3.500v9h-4.500v4h4v4.500h-12z" fill="#ff00ff"/>
<path d="M1389.500 443h19.500v5h-3.500v5h-3.500v9h-4.500v4h4v4.500h-12z" fill="#ff00ff"/>
<path d="M1389.500 480h19.500v5h-3.500v5h-3.500v9h-4.500v4h4v4.500h-12z" fill="#ff00ff"/>
<path d="M1390 265.500l7.500-16.500h4.500l6.500 16.500h-4l-4-11-3 6.500 2.500 1.500-1.500 3z" fill="#3a8fce"/><path d="M1390 265.500l7.500-16.500h4.500l-8 14.500z" fill="#5aa850"/><path d="M1394 263.500l3.500-4 4.500 2.500-1.500 3.500h-10.500z" fill="#2a70b0"/>
<text x="1412.5" y="264" font-size="14.5" fill="#4a4a4a" textLength="80.5" lengthAdjust="spacingAndGlyphs" font-weight="bold">AUTODESK</text>
<rect x="446.500" y="246.500" width="821" height="675" fill="none" stroke="#c9a0ff" stroke-width="1.200"/>
<path d="M490 932h777.500" stroke="#c9a0ff" stroke-width="1"/>
<circle cx="480.700" cy="932" r="6.500" fill="none" stroke="#ff00ff" stroke-width="1.200"/>
<text x="479" y="934.5" font-size="7" fill="#ff00ff" >1</text>
<text x="490" y="929.5" font-size="7.5" fill="#ff00ff" textLength="57.5" lengthAdjust="spacingAndGlyphs" >01 - Entry Level</text>
<text x="492.5" y="938" font-size="5" fill="#ff00ff" textLength="15.5" lengthAdjust="spacingAndGlyphs" >1 : 100</text>
<defs><pattern id="stip" width="64" height="64" patternUnits="userSpaceOnUse"><rect width="64" height="64" fill="#fff"/><path d="M0 1.5h1M2 1.5h1M6 1.5h1M9 0.5h1M10 0.5h1M16 0.5h1M20 0.5h1M23 1.5h1M29 1.5h1M31 0.5h1M33 1.5h1M34 1.5h1M37 1.5h1M39 0.5h1M45 1.5h1M50 2.5h1M53 0.5h1M52 1.5h1M54 1.5h1M58 0.5h1M58 1.5h1M58 2.5h1M63 1.5h1M62 2.5h1M61 3.5h1M11 3.5h1M12 2.5h1M14 2.5h1M14 3.5h1M17 3.5h1M20 3.5h1M25 3.5h1M27 3.5h1M30 2.5h1M31 1.5h1M32 3.5h1M38 3.5h1M45 3.5h1M50 3.5h1M58 3.5h1M7 5.5h1M11 5.5h1M18 4.5h1M22 4.5h1M22 6.5h1M24 5.5h1M23 6.5h1M35 4.5h1M38 5.5h1M44 5.5h1M46 5.5h1M51 4.5h1M1 6.5h1M1 7.5h1M4 7.5h1M11 6.5h1M16 6.5h1M23 8.5h1M27 7.5h1M28 6.5h1M29 7.5h1M38 6.5h1M40 6.5h1M42 7.5h1M53 7.5h1M54 6.5h1M61 7.5h1M1 9.5h1M2 9.5h1M3 9.5h1M4 9.5h1M5 10.5h1M7 9.5h1M10 8.5h1M12 9.5h1M15 8.5h1M16 8.5h1M18 9.5h1M20 9.5h1M26 7.5h1M26 8.5h1M28 8.5h1M28 9.5h1M28 10.5h1M30 9.5h1M40 8.5h1M45 8.5h1M51 8.5h1M53 9.5h1M61 8.5h1M1 11.5h1M1 12.5h1M16 12.5h1M17 12.5h1M23 10.5h1M27 11.5h1M30 11.5h1M33 11.5h1M35 11.5h1M38 10.5h1M47 11.5h1M49 12.5h1M53 11.5h1M57 11.5h1M58 11.5h1M63 11.5h1M2 12.5h1M2 13.5h1M10 13.5h1M16 11.5h1M17 10.5h1M21 11.5h1M25 12.5h1M29 12.5h1M32 13.5h1M33 14.5h1M36 14.5h1M38 13.5h1M40 12.5h1M43 12.5h1M42 13.5h1M51 14.5h1M54 12.5h1M58 12.5h1M63 13.5h1M0 13.5h1M2 14.5h1M14 15.5h1M12 17.5h1M20 14.5h1M21 14.5h1M26 15.5h1M36 15.5h1M38 15.5h1M43 15.5h1M46 14.5h1M55 14.5h1M56 15.5h1M61 15.5h1M0 17.5h1M8 16.5h1M7 17.5h1M6 18.5h1M18 17.5h1M19 16.5h1M21 17.5h1M23 15.5h1M24 17.5h1M24 18.5h1M31 16.5h1M36 16.5h1M41 16.5h1M42 15.5h1M44 17.5h1M48 16.5h1M52 17.5h1M61 17.5h1M10 16.5h1M11 18.5h1M25 19.5h1M24 20.5h1M28 20.5h1M30 19.5h1M32 18.5h1M41 19.5h1M44 19.5h1M51 19.5h1M54 18.5h1M59 16.5h1M60 18.5h1M5 21.5h1M8 20.5h1M11 20.5h1M13 20.5h1M19 20.5h1M20 21.5h1M25 21.5h1M26 22.5h1M27 21.5h1M29 19.5h1M34 20.5h1M36 20.5h1M38 21.5h1M51 20.5h1M55 21.5h1M56 21.5h1M56 22.5h1M60 20.5h1M63 20.5h1M0 23.5h1M3 23.5h1M1 25.5h1M4 23.5h1M7 22.5h1M8 21.5h1M12 22.5h1M12 23.5h1M16 23.5h1M15 24.5h1M18 23.5h1M21 23.5h1M22 23.5h1M28 22.5h1M28 23.5h1M32 22.5h1M43 22.5h1M44 22.5h1M48 23.5h1M49 23.5h1M53 23.5h1M55 23.5h1M59 22.5h1M62 22.5h1M3 24.5h1M5 24.5h1M3 26.5h1M14 24.5h1M18 25.5h1M21 24.5h1M24 25.5h1M33 25.5h1M37 24.5h1M41 23.5h1M45 24.5h1M45 25.5h1M49 24.5h1M56 25.5h1M4 26.5h1M13 27.5h1M16 27.5h1M22 27.5h1M27 27.5h1M30 27.5h1M41 27.5h1M42 28.5h1M48 26.5h1M50 26.5h1M53 27.5h1M57 27.5h1M1 29.5h1M2 29.5h1M8 28.5h1M11 28.5h1M17 28.5h1M18 29.5h1M18 30.5h1M21 28.5h1M29 29.5h1M31 29.5h1M33 28.5h1M34 29.5h1M38 28.5h1M37 29.5h1M43 28.5h1M47 29.5h1M49 30.5h1M50 28.5h1M53 28.5h1M56 29.5h1M58 28.5h1M60 28.5h1M7 31.5h1M8 31.5h1M14 31.5h1M18 31.5h1M20 31.5h1M24 30.5h1M25 30.5h1M28 30.5h1M32 31.5h1M48 28.5h1M49 31.5h1M1 32.5h1M10 33.5h1M21 34.5h1M26 33.5h1M29 33.5h1M30 32.5h1M41 32.5h1M42 31.5h1M43 33.5h1M50 33.5h1M56 34.5h1M58 32.5h1M59 33.5h1M60 34.5h1M8 34.5h1M9 35.5h1M12 34.5h1M13 33.5h1M17 34.5h1M18 35.5h1M23 35.5h1M34 34.5h1M34 35.5h1M37 34.5h1M44 35.5h1M45 36.5h1M45 35.5h1M51 34.5h1M52 35.5h1M54 35.5h1M63 34.5h1M5 37.5h1M14 38.5h1M16 36.5h1M18 36.5h1M19 36.5h1M28 36.5h1M35 37.5h1M42 36.5h1M45 37.5h1M50 36.5h1M51 36.5h1M54 36.5h1M54 37.5h1M54 38.5h1M57 36.5h1M58 36.5h1M59 36.5h1M60 36.5h1M61 36.5h1M60 37.5h1M0 38.5h1M5 39.5h1M6 39.5h1M18 39.5h1M17 40.5h1M23 38.5h1M24 39.5h1M30 38.5h1M35 39.5h1M40 39.5h1M47 38.5h1M51 38.5h1M53 39.5h1M58 37.5h1M59 38.5h1M60 39.5h1M63 38.5h1M6 41.5h1M18 41.5h1M25 41.5h1M27 41.5h1M29 41.5h1M31 40.5h1M32 40.5h1M33 42.5h1M42 40.5h1M45 41.5h1M47 41.5h1M48 40.5h1M50 40.5h1M57 41.5h1M59 40.5h1M60 41.5h1M61 40.5h1M0 43.5h1M1 42.5h1M3 42.5h1M7 43.5h1M10 42.5h1M15 43.5h1M21 42.5h1M26 43.5h1M39 43.5h1M40 43.5h1M42 43.5h1M46 42.5h1M48 43.5h1M58 42.5h1M61 42.5h1M62 42.5h1M1 45.5h1M3 45.5h1M9 45.5h1M10 44.5h1M12 45.5h1M16 45.5h1M19 45.5h1M23 44.5h1M26 45.5h1M27 46.5h1M28 46.5h1M34 43.5h1M38 44.5h1M42 45.5h1M46 45.5h1M51 44.5h1M52 44.5h1M56 45.5h1M58 45.5h1M0 47.5h1M3 46.5h1M10 48.5h1M11 49.5h1M11 47.5h1M11 48.5h1M15 46.5h1M16 47.5h1M19 46.5h1M21 47.5h1M23 46.5h1M24 47.5h1M29 47.5h1M33 47.5h1M32 48.5h1M37 46.5h1M39 47.5h1M44 46.5h1M45 47.5h1M53 46.5h1M59 47.5h1M0 45.5h1M7 49.5h1M8 49.5h1M9 49.5h1M8 48.5h1M13 49.5h1M22 49.5h1M25 49.5h1M27 49.5h1M30 48.5h1M33 49.5h1M35 49.5h1M35 50.5h1M38 48.5h1M44 48.5h1M47 48.5h1M48 48.5h1M50 48.5h1M54 49.5h1M55 50.5h1M56 49.5h1M56 50.5h1M58 48.5h1M1 50.5h1M3 51.5h1M8 52.5h1M11 50.5h1M12 51.5h1M13 50.5h1M18 51.5h1M21 51.5h1M22 52.5h1M23 53.5h1M25 50.5h1M26 51.5h1M33 51.5h1M39 51.5h1M41 51.5h1M47 51.5h1M49 53.5h1M48 50.5h1M52 51.5h1M16 53.5h1M27 52.5h1M28 52.5h1M27 53.5h1M32 52.5h1M34 52.5h1M44 53.5h1M43 54.5h1M52 53.5h1M53 52.5h1M63 53.5h1M0 55.5h1M1 54.5h1M3 54.5h1M5 55.5h1M7 54.5h1M8 53.5h1M9 54.5h1M10 54.5h1M12 54.5h1M25 55.5h1M29 55.5h1M30 54.5h1M31 53.5h1M32 54.5h1M35 55.5h1M34 56.5h1M36 55.5h1M41 56.5h1M45 54.5h1M52 55.5h1M61 54.5h1M63 55.5h1M0 56.5h1M2 56.5h1M5 56.5h1M7 56.5h1M9 56.5h1M16 56.5h1M18 56.5h1M22 57.5h1M27 56.5h1M29 57.5h1M40 57.5h1M48 56.5h1M51 57.5h1M52 57.5h1M2 59.5h1M1 60.5h1M14 59.5h1M23 59.5h1M25 59.5h1M27 58.5h1M28 59.5h1M31 59.5h1M37 59.5h1M36 60.5h1M39 58.5h1M38 59.5h1M44 59.5h1M47 59.5h1M48 58.5h1M48 59.5h1M48 60.5h1M48 61.5h1M50 58.5h1M58 59.5h1M62 59.5h1M9 60.5h1M13 60.5h1M19 60.5h1M20 62.5h1M19 63.5h1M33 59.5h1M34 58.5h1M41 60.5h1M42 61.5h1M44 61.5h1M49 60.5h1M51 60.5h1M56 60.5h1M61 60.5h1M62 60.5h1M4 63.5h1M9 63.5h1M14 63.5h1M14 0.5h1M17 62.5h1M18 63.5h1M18 62.5h1M22 63.5h1M34 0.5h1M36 62.5h1M41 62.5h1M42 62.5h1M44 62.5h1M46 63.5h1M49 62.5h1M49 0.5h1M53 63.5h1M55 63.5h1M57 62.5h1M60 62.5h1" stroke="#828282" stroke-width="1" fill="none" shape-rendering="crispEdges"/><path d="M12 0.5h1M15 0.5h1M19 0.5h1M25 0.5h1M26 0.5h1M30 1.5h1M35 1.5h1M42 0.5h1M49 1.5h1M50 1.5h1M57 1.5h1M60 0.5h1M1 2.5h1M2 3.5h1M10 4.5h1M14 4.5h1M17 2.5h1M17 4.5h1M18 3.5h1M21 2.5h1M26 3.5h1M37 3.5h1M40 2.5h1M61 2.5h1M4 5.5h1M12 4.5h1M17 5.5h1M22 5.5h1M29 5.5h1M32 4.5h1M40 5.5h1M43 4.5h1M45 5.5h1M46 4.5h1M48 5.5h1M56 5.5h1M57 5.5h1M59 4.5h1M60 5.5h1M6 6.5h1M13 6.5h1M14 7.5h1M23 7.5h1M23 9.5h1M24 7.5h1M29 6.5h1M30 7.5h1M33 6.5h1M35 6.5h1M37 7.5h1M45 7.5h1M48 6.5h1M51 6.5h1M13 8.5h1M11 10.5h1M25 8.5h1M27 6.5h1M32 8.5h1M34 8.5h1M37 9.5h1M46 8.5h1M46 9.5h1M46 10.5h1M49 8.5h1M50 8.5h1M59 8.5h1M2 10.5h1M7 10.5h1M9 11.5h1M10 11.5h1M11 11.5h1M13 11.5h1M15 11.5h1M17 11.5h1M37 11.5h1M36 12.5h1M40 11.5h1M44 11.5h1M49 11.5h1M51 10.5h1M53 12.5h1M54 11.5h1M5 13.5h1M15 12.5h1M20 12.5h1M26 12.5h1M31 12.5h1M33 12.5h1M35 13.5h1M36 13.5h1M46 13.5h1M50 13.5h1M52 13.5h1M57 12.5h1M62 13.5h1M1 15.5h1M13 16.5h1M22 14.5h1M27 14.5h1M25 16.5h1M29 14.5h1M37 15.5h1M40 15.5h1M44 14.5h1M45 13.5h1M49 15.5h1M57 16.5h1M2 16.5h1M4 17.5h1M14 17.5h1M21 18.5h1M22 16.5h1M26 16.5h1M35 16.5h1M35 17.5h1M47 16.5h1M51 16.5h1M54 17.5h1M56 16.5h1M59 17.5h1M2 19.5h1M4 19.5h1M6 19.5h1M8 18.5h1M9 17.5h1M17 19.5h1M17 20.5h1M23 21.5h1M26 18.5h1M28 19.5h1M37 18.5h1M39 19.5h1M42 18.5h1M48 19.5h1M57 18.5h1M58 17.5h1M12 21.5h1M15 20.5h1M16 21.5h1M17 22.5h1M22 21.5h1M31 20.5h1M33 21.5h1M37 19.5h1M38 18.5h1M41 20.5h1M42 19.5h1M44 20.5h1M46 20.5h1M52 19.5h1M53 18.5h1M58 20.5h1M2 24.5h1M5 23.5h1M9 23.5h1M25 22.5h1M27 22.5h1M37 22.5h1M43 23.5h1M47 23.5h1M51 23.5h1M57 23.5h1M4 25.5h1M6 25.5h1M10 25.5h1M23 24.5h1M27 24.5h1M39 24.5h1M38 25.5h1M40 24.5h1M42 24.5h1M46 24.5h1M54 24.5h1M59 24.5h1M61 24.5h1M62 23.5h1M0 27.5h1M7 27.5h1M9 26.5h1M15 26.5h1M21 26.5h1M21 27.5h1M36 27.5h1M35 28.5h1M38 27.5h1M46 27.5h1M59 27.5h1M61 26.5h1M3 30.5h1M7 28.5h1M9 28.5h1M15 29.5h1M22 28.5h1M25 29.5h1M28 28.5h1M34 28.5h1M37 28.5h1M41 28.5h1M44 29.5h1M43 30.5h1M48 29.5h1M54 28.5h1M57 29.5h1M56 30.5h1M0 30.5h1M9 30.5h1M10 31.5h1M20 32.5h1M23 30.5h1M30 31.5h1M41 31.5h1M46 30.5h1M51 30.5h1M58 31.5h1M63 31.5h1M0 31.5h1M3 33.5h1M5 33.5h1M9 34.5h1M12 33.5h1M19 33.5h1M21 33.5h1M22 33.5h1M25 32.5h1M30 33.5h1M35 33.5h1M39 33.5h1M43 32.5h1M43 34.5h1M48 33.5h1M56 33.5h1M62 33.5h1M3 34.5h1M7 34.5h1M25 35.5h1M26 35.5h1M27 34.5h1M42 34.5h1M46 34.5h1M48 35.5h1M53 35.5h1M63 35.5h1M3 36.5h1M7 36.5h1M9 36.5h1M15 37.5h1M13 39.5h1M30 37.5h1M34 38.5h1M37 37.5h1M38 38.5h1M39 36.5h1M40 37.5h1M48 37.5h1M52 36.5h1M53 37.5h1M1 37.5h1M3 38.5h1M9 39.5h1M17 39.5h1M20 39.5h1M20 40.5h1M33 38.5h1M34 39.5h1M37 39.5h1M39 38.5h1M40 40.5h1M55 39.5h1M57 38.5h1M0 41.5h1M3 41.5h1M8 41.5h1M11 41.5h1M16 40.5h1M23 40.5h1M34 41.5h1M41 41.5h1M53 41.5h1M4 43.5h1M8 42.5h1M9 41.5h1M12 42.5h1M13 42.5h1M14 42.5h1M18 43.5h1M18 44.5h1M20 42.5h1M28 43.5h1M32 42.5h1M32 43.5h1M41 42.5h1M47 43.5h1M51 43.5h1M52 43.5h1M54 43.5h1M55 44.5h1M57 42.5h1M5 44.5h1M17 45.5h1M18 45.5h1M21 45.5h1M22 46.5h1M25 45.5h1M29 45.5h1M27 47.5h1M31 45.5h1M33 44.5h1M49 45.5h1M61 45.5h1M63 44.5h1M7 46.5h1M9 47.5h1M13 46.5h1M30 46.5h1M28 48.5h1M40 46.5h1M48 47.5h1M51 47.5h1M52 47.5h1M55 46.5h1M56 46.5h1M60 47.5h1M61 47.5h1M62 47.5h1M63 46.5h1M5 48.5h1M40 48.5h1M43 48.5h1M5 50.5h1M6 50.5h1M9 51.5h1M31 51.5h1M32 50.5h1M34 50.5h1M35 51.5h1M43 50.5h1M48 52.5h1M55 51.5h1M62 51.5h1M3 53.5h1M6 52.5h1M11 53.5h1M19 52.5h1M20 52.5h1M24 53.5h1M31 52.5h1M38 52.5h1M40 53.5h1M43 52.5h1M45 52.5h1M51 52.5h1M53 54.5h1M58 52.5h1M59 51.5h1M13 53.5h1M14 54.5h1M21 54.5h1M26 54.5h1M31 54.5h1M33 54.5h1M33 55.5h1M40 55.5h1M42 54.5h1M49 54.5h1M56 54.5h1M59 54.5h1M10 56.5h1M12 57.5h1M19 56.5h1M35 57.5h1M37 57.5h1M57 56.5h1M62 57.5h1M1 58.5h1M7 58.5h1M9 58.5h1M12 58.5h1M20 59.5h1M32 58.5h1M34 59.5h1M43 58.5h1M53 59.5h1M54 58.5h1M57 59.5h1M60 58.5h1M4 60.5h1M7 60.5h1M11 61.5h1M21 61.5h1M23 61.5h1M24 61.5h1M32 60.5h1M35 61.5h1M37 60.5h1M43 60.5h1M50 61.5h1M54 61.5h1M1 63.5h1M2 62.5h1M0 0.5h1M10 63.5h1M12 63.5h1M13 62.5h1M21 62.5h1M24 62.5h1M25 63.5h1M33 62.5h1M34 63.5h1M38 63.5h1M50 63.5h1M48 1.5h1M53 62.5h1M58 61.5h1M59 63.5h1" stroke="#ababab" stroke-width="1" fill="none" shape-rendering="crispEdges"/></pattern>
<pattern id="dk" width="12" height="12" patternUnits="userSpaceOnUse"><rect width="12" height="12" fill="#8e8e8e"/><path d="M0.0 0h1.4M1.5 3h1.4M0.0 6h1.4M1.5 9h1.4M3.0 0h1.4M4.5 3h1.4M3.0 6h1.4M4.5 9h1.4M6.0 0h1.4M7.5 3h1.4M6.0 6h1.4M7.5 9h1.4M9.0 0h1.4M10.5 3h1.4M9.0 6h1.4M10.5 9h1.4" stroke="#a8a8a8" stroke-width="1"/><path d="M0 1.500h12M0 4.500h12M0 7.500h12M0 10.500h12" stroke="#828282" stroke-width="0.800" stroke-dasharray="1.500 1.500"/></pattern></defs>
<path d="M581.500 313H946V422H750.500V617H817.500V679H750.500V730H1230V840H581.500Z" fill="url(#stip)"/>
<path d="M751 423H836V730H751V679H818V617H751Z" fill="url(#dk)"/>
<rect x="918" y="318" width="26" height="62" fill="#fff" fill-opacity="0.750"/>
<rect x="665" y="770" width="26" height="68" fill="#fff" fill-opacity="0.600"/>
<rect x="1203" y="775" width="25" height="62" fill="#fff" fill-opacity="0.600"/>
<path d="M583 840V314.500H743M944.500 396V420.500H749.300V618.500M749.300 677.500V731.500H1228.500V760M583 838.500H1228M749.500 618.500H816V677.500H749.500" fill="none" stroke="#f4f470" stroke-width="2"/>
<path d="M638.300 397V436M638.300 471V551M663.200 397V436M663.200 471V551M664 395.500H758" stroke="#f4f470" stroke-width="1.600" fill="none"/>
<path d="M581.500 840.500V313.500H743M751 423H835.500V730M751 423V616.500H817.500V679.500H751V730M581.500 840.500H1230.500V730.500" fill="none" stroke="#6a30b0" stroke-width="1.300"/>
<path d="M573 323.8h9M573 343.3h9M573 362.8h9M573 382.3h9M573 609.0h9M573 628.5h9M573 648.0h9M573 667.5h9M573 687.0h9M573 706.5h9M573 726.0h9M573 745.5h9M573 765.0h9M573 784.5h9M573 804.0h9M573 823.5h9M592.1 841v9M611.7 841v9M631.3 841v9M650.9 841v9M812.1 841v9M831.6 841v9M851.1 841v9M870.6 841v9M890.1 841v9M909.6 841v9M929.1 841v9M948.6 841v9M968.1 841v9M987.6 841v9M1007.1 841v9M1026.6 841v9M1046.1 841v9M1065.6 841v9M1085.1 841v9M1104.6 841v9M1124.1 841v9M1143.6 841v9M1163.1 841v9M1182.6 841v9" stroke="#a05a5a" stroke-width="1.500"/>
<path d="M743 314L947 314M946 313L946 396M758.5 395L918 395M758.5 323L758.5 396M797 314L797 396M856 314L856 396M886 340L886 396M917 314L917 396M823.5 372L823.5 396M911.5 372L911.5 395M758.5 372L824 372M856 340L917 340M886 372L917 372M581 394.5L665 394.5M581 553L665 553M583 553L583 590M581 589L664 589M609 553L609 571M663.5 553L663.5 690M663.5 707L663.5 762M581 648.5L664 648.5M581 688L664 688M655 570L664 570M691 758L750 758M715 758L715 781M715 780.5L750 780.5M749 758L749 841M765 758L786 758M765 758L765 781M785.5 758L785.5 781M765 780.5L786 780.5M774 781L774 841M778.5 781L778.5 841M802 758L802 841M802 758.8L1202 758.8M909.5 759L909.5 840M968.5 759L968.5 840M1085.5 759L1085.5 840M1144 759L1144 840M1201.5 759L1201.5 841M663 840.5L803 840.5M663.5 762L663.5 841M691.5 758L691.5 841M1201 840.5L1231 840.5M1230.5 762L1230.5 841" stroke="#6aaa7a" stroke-width="2.200" fill="none"/>
<path d="M665.500 764V838M689.500 764V838M585.500 555.500V588M585 555.500H607" stroke="#6aaa7a" stroke-width="1" fill="none"/>
<path d="M741 440H755.500M741 618.500H754M741 677.500H754" stroke="#70e8b0" stroke-width="1.500"/>
<rect x="758.5" y="318.2" width="9" height="5.5" rx="2" fill="#f4b080"/>
<path d="M758.5 323.8q1 7 8.0 6.500q1.500-3 1-6.500" fill="none" stroke="#f4b080" stroke-width="0.900"/>
<rect x="815.5" y="368.2" width="9" height="5.5" rx="2" fill="#f4b080"/>
<path d="M815.5 373.8q1 7 8.0 6.500q1.500-3 1-6.500" fill="none" stroke="#f4b080" stroke-width="0.900"/>
<rect x="877.5" y="336.2" width="9" height="5.5" rx="2" fill="#f4b080"/>
<path d="M877.5 341.8q1 7 8.0 6.500q1.500-3 1-6.500" fill="none" stroke="#f4b080" stroke-width="0.900"/>
<rect x="890.5" y="364.2" width="9" height="5.5" rx="2" fill="#f4b080"/>
<path d="M890.5 369.8q1 7 8.0 6.500q1.500-3 1-6.500" fill="none" stroke="#f4b080" stroke-width="0.900"/>
<rect x="821.5" y="392.2" width="9" height="5.5" rx="2" fill="#f4b080"/>
<path d="M821.5 397.8q1 7 8.0 6.500q1.500-3 1-6.500" fill="none" stroke="#f4b080" stroke-width="0.900"/>
<rect x="835.5" y="392.2" width="9" height="5.5" rx="2" fill="#f4b080"/>
<path d="M835.5 397.8q1 7 8.0 6.500q1.500-3 1-6.500" fill="none" stroke="#f4b080" stroke-width="0.900"/>
<rect x="872.5" y="392.2" width="9" height="5.5" rx="2" fill="#f4b080"/>
<path d="M872.5 397.8q1 7 8.0 6.500q1.500-3 1-6.500" fill="none" stroke="#f4b080" stroke-width="0.900"/>
<rect x="886.5" y="392.2" width="9" height="5.5" rx="2" fill="#f4b080"/>
<path d="M886.5 397.8q1 7 8.0 6.500q1.500-3 1-6.500" fill="none" stroke="#f4b080" stroke-width="0.900"/>
<rect x="918.5" y="382.2" width="9" height="5.5" rx="2" fill="#f4b080"/>
<path d="M918.5 387.8q1 7 8.0 6.500q1.500-3 1-6.500" fill="none" stroke="#f4b080" stroke-width="0.900"/>
<rect x="941.5" y="374.2" width="9" height="5.5" rx="2" fill="#f4b080"/>
<path d="M941.5 379.8q1 7 8.0 6.500q1.500-3 1-6.500" fill="none" stroke="#f4b080" stroke-width="0.900"/>
<rect x="699.5" y="392.2" width="9" height="5.5" rx="2" fill="#f4b080"/>
<path d="M699.5 397.8q1 7 8.0 6.500q1.500-3 1-6.500" fill="none" stroke="#f4b080" stroke-width="0.900"/>
<rect x="633.5" y="442.2" width="9" height="5.5" rx="2" fill="#f4b080"/>
<path d="M633.5 447.8q1 7 8.0 6.500q1.500-3 1-6.500" fill="none" stroke="#f4b080" stroke-width="0.900"/>
<rect x="656.5" y="442.2" width="9" height="5.5" rx="2" fill="#f4b080"/>
<path d="M656.5 447.8q1 7 8.0 6.500q1.500-3 1-6.500" fill="none" stroke="#f4b080" stroke-width="0.900"/>
<rect x="633.5" y="461.2" width="9" height="5.5" rx="2" fill="#f4b080"/>
<path d="M633.5 466.8q1 7 8.0 6.500q1.500-3 1-6.500" fill="none" stroke="#f4b080" stroke-width="0.900"/>
<rect x="656.5" y="461.2" width="9" height="5.5" rx="2" fill="#f4b080"/>
<path d="M656.5 466.8q1 7 8.0 6.500q1.500-3 1-6.500" fill="none" stroke="#f4b080" stroke-width="0.900"/>
<rect x="596.5" y="549.2" width="9" height="5.5" rx="2" fill="#f4b080"/>
<path d="M596.5 554.8q1 7 8.0 6.500q1.500-3 1-6.500" fill="none" stroke="#f4b080" stroke-width="0.900"/>
<rect x="601.5" y="574.2" width="9" height="5.5" rx="2" fill="#f4b080"/>
<path d="M601.5 579.8q1 7 8.0 6.500q1.500-3 1-6.500" fill="none" stroke="#f4b080" stroke-width="0.900"/>
<rect x="647.5" y="573.2" width="9" height="5.5" rx="2" fill="#f4b080"/>
<path d="M647.5 578.8q1 7 8.0 6.500q1.500-3 1-6.500" fill="none" stroke="#f4b080" stroke-width="0.900"/>
<rect x="657.5" y="639.2" width="9" height="5.5" rx="2" fill="#f4b080"/>
<path d="M657.5 644.8q1 7 8.0 6.500q1.500-3 1-6.500" fill="none" stroke="#f4b080" stroke-width="0.900"/>
<rect x="657.5" y="668.2" width="9" height="5.5" rx="2" fill="#f4b080"/>
<path d="M657.5 673.8q1 7 8.0 6.500q1.500-3 1-6.500" fill="none" stroke="#f4b080" stroke-width="0.900"/>
<rect x="657.5" y="695.2" width="9" height="5.5" rx="2" fill="#f4b080"/>
<path d="M657.5 700.8q1 7 8.0 6.500q1.500-3 1-6.500" fill="none" stroke="#f4b080" stroke-width="0.900"/>
<rect x="663.5" y="767.2" width="9" height="5.5" rx="2" fill="#f4b080"/>
<path d="M663.5 772.8q1 7 8.0 6.500q1.500-3 1-6.500" fill="none" stroke="#f4b080" stroke-width="0.900"/>
<rect x="704.5" y="756.2" width="9" height="5.5" rx="2" fill="#f4b080"/>
<path d="M704.5 761.8q1 7 8.0 6.500q1.500-3 1-6.500" fill="none" stroke="#f4b080" stroke-width="0.900"/>
<rect x="717.5" y="756.2" width="9" height="5.5" rx="2" fill="#f4b080"/>
<path d="M717.5 761.8q1 7 8.0 6.500q1.500-3 1-6.500" fill="none" stroke="#f4b080" stroke-width="0.900"/>
<rect x="749.5" y="782.2" width="9" height="5.5" rx="2" fill="#f4b080"/>
<path d="M749.5 787.8q1 7 8.0 6.500q1.500-3 1-6.500" fill="none" stroke="#f4b080" stroke-width="0.900"/>
<rect x="791.5" y="782.2" width="9" height="5.5" rx="2" fill="#f4b080"/>
<path d="M791.5 787.8q1 7 8.0 6.500q1.500-3 1-6.500" fill="none" stroke="#f4b080" stroke-width="0.900"/>
<rect x="806.5" y="756.2" width="9" height="5.5" rx="2" fill="#f4b080"/>
<path d="M806.5 761.8q1 7 8.0 6.500q1.500-3 1-6.500" fill="none" stroke="#f4b080" stroke-width="0.900"/>
<rect x="899.0" y="756.2" width="9" height="5.5" rx="2" fill="#f4b080"/>
<path d="M899.0 761.8q1 7 8.0 6.500q1.500-3 1-6.500" fill="none" stroke="#f4b080" stroke-width="0.900"/>
<rect x="911.0" y="756.2" width="9" height="5.5" rx="2" fill="#f4b080"/>
<path d="M911.0 761.8q1 7 8.0 6.500q1.500-3 1-6.500" fill="none" stroke="#f4b080" stroke-width="0.900"/>
<rect x="957.5" y="756.2" width="9" height="5.5" rx="2" fill="#f4b080"/>
<path d="M957.5 761.8q1 7 8.0 6.500q1.500-3 1-6.500" fill="none" stroke="#f4b080" stroke-width="0.900"/>
<rect x="970.0" y="756.2" width="9" height="5.5" rx="2" fill="#f4b080"/>
<path d="M970.0 761.8q1 7 8.0 6.500q1.500-3 1-6.500" fill="none" stroke="#f4b080" stroke-width="0.900"/>
<rect x="1074.5" y="756.2" width="9" height="5.5" rx="2" fill="#f4b080"/>
<path d="M1074.5 761.8q1 7 8.0 6.500q1.500-3 1-6.500" fill="none" stroke="#f4b080" stroke-width="0.900"/>
<rect x="1087.0" y="756.2" width="9" height="5.5" rx="2" fill="#f4b080"/>
<path d="M1087.0 761.8q1 7 8.0 6.500q1.500-3 1-6.500" fill="none" stroke="#f4b080" stroke-width="0.900"/>
<rect x="1133.0" y="756.2" width="9" height="5.5" rx="2" fill="#f4b080"/>
<path d="M1133.0 761.8q1 7 8.0 6.500q1.500-3 1-6.500" fill="none" stroke="#f4b080" stroke-width="0.900"/>
<rect x="1145.5" y="756.2" width="9" height="5.5" rx="2" fill="#f4b080"/>
<path d="M1145.5 761.8q1 7 8.0 6.500q1.500-3 1-6.500" fill="none" stroke="#f4b080" stroke-width="0.900"/>
<rect x="1204.5" y="765.2" width="9" height="5.5" rx="2" fill="#f4b080"/>
<path d="M1204.5 770.8q1 7 8.0 6.500q1.500-3 1-6.500" fill="none" stroke="#f4b080" stroke-width="0.900"/>
<rect x="1226.5" y="770.2" width="9" height="5.5" rx="2" fill="#f4b080"/>
<path d="M1226.5 775.8q1 7 8.0 6.500q1.500-3 1-6.500" fill="none" stroke="#f4b080" stroke-width="0.900"/>
<rect x="768" y="616" width="10" height="5" rx="2" fill="#f4b080"/><path d="M764.500 616V609.500q7 0 8.500 7q1.500-7 9.500-7V616M767 617q6 6 12.500 0" fill="none" stroke="#f4b080" stroke-width="1"/>
<path d="M921 328.0H928M921 330.1H928M921 332.2H928M921 334.3H928M921 336.4H928M921 338.5H928M921 340.6H928M921 342.7H928M921 344.8H928M921 346.9H928M921 349.0H928M921 351.1H928M921 353.2H928M921 355.3H928M921 357.4H928M921 359.5H928M921 361.6H928" stroke="#f4b080" stroke-width="1" stroke-opacity="1"/>
<path d="M934 341.0H943M934 343.1H943M934 345.2H943M934 347.3H943M934 349.4H943M934 351.5H943M934 353.6H943M934 355.7H943M934 357.8H943M934 359.9H943M934 362.0H943M934 364.1H943" stroke="#f4b080" stroke-width="1" stroke-opacity="1"/>
<rect x="935" y="366" width="7" height="5" fill="#f4b080"/>
<path d="M699 564.0H709M699 566.1H709M699 568.2H709M699 570.3H709M699 572.4H709M699 574.5H709M699 576.6H709M699 578.7H709M699 580.8H709M699 582.9H709M699 585.0H709M699 587.1H709M699 589.2H709M699 591.3H709M699 593.4H709M699 595.5H709M699 597.6H709M699 599.7H709M699 601.8H709M699 603.9H709M699 606.0H709M699 608.1H709M699 610.2H709M699 612.3H709M699 614.4H709M699 616.5H709M699 618.6H709M699 620.7H709M699 622.8H709M699 624.9H709" stroke="#f4b080" stroke-width="1" stroke-opacity="0.55"/>
<path d="M699 656.0H709M699 658.1H709M699 660.2H709M699 662.3H709M699 664.4H709M699 666.5H709M699 668.6H709M699 670.7H709M699 672.8H709M699 674.9H709M699 677.0H709M699 679.1H709M699 681.2H709M699 683.3H709M699 685.4H709M699 687.5H709M699 689.6H709M699 691.7H709M699 693.8H709M699 695.9H709M699 698.0H709M699 700.1H709M699 702.2H709M699 704.3H709M699 706.4H709M699 708.5H709M699 710.6H709M699 712.7H709M699 714.8H709" stroke="#f4b080" stroke-width="1" stroke-opacity="0.55"/>
<rect x="695.500" y="538" width="17" height="25" fill="#f4b080" fill-opacity="0.700"/><path d="M695.500 538V563M712.500 538V556M695.500 716V738M712.500 716V738" stroke="#ff8a78" stroke-width="1.200"/><rect x="695.500" y="716" width="17" height="22" fill="#f4b080" fill-opacity="0.700"/>
<rect x="699" y="533.500" width="5" height="3.500" fill="#f4b080"/>
<path d="M666 791.0H676M666 793.1H676M666 795.2H676M666 797.3H676M666 799.4H676M666 801.5H676M666 803.6H676M666 805.7H676M666 807.8H676M666 809.9H676M666 812.0H676M666 814.1H676M666 816.2H676M666 818.3H676M666 820.4H676M666 822.5H676M666 824.6H676M666 826.7H676M666 828.8H676" stroke="#f4b080" stroke-width="1" stroke-opacity="1"/>
<path d="M683 791.0H689M683 793.1H689M683 795.2H689M683 797.3H689M683 799.4H689M683 801.5H689M683 803.6H689M683 805.7H689M683 807.8H689M683 809.9H689M683 812.0H689M683 814.1H689M683 816.2H689M683 818.3H689M683 820.4H689M683 822.5H689M683 824.6H689M683 826.7H689M683 828.8H689" stroke="#f4b080" stroke-width="1" stroke-opacity="1"/>
<rect x="669" y="787" width="5" height="3.500" fill="#f4b080"/>
<path d="M1204 793.0H1210M1204 795.1H1210M1204 797.2H1210M1204 799.3H1210M1204 801.4H1210M1204 803.5H1210M1204 805.6H1210M1204 807.7H1210M1204 809.8H1210M1204 811.9H1210M1204 814.0H1210M1204 816.1H1210M1204 818.2H1210M1204 820.3H1210M1204 822.4H1210M1204 824.5H1210M1204 826.6H1210" stroke="#f4b080" stroke-width="1" stroke-opacity="1"/>
<path d="M1221 793.0H1227M1221 795.1H1227M1221 797.2H1227M1221 799.3H1227M1221 801.4H1227M1221 803.5H1227M1221 805.6H1227M1221 807.7H1227M1221 809.8H1227M1221 811.9H1227M1221 814.0H1227M1221 816.1H1227M1221 818.2H1227M1221 820.3H1227M1221 822.4H1227M1221 824.5H1227M1221 826.6H1227" stroke="#f4b080" stroke-width="1" stroke-opacity="1"/>
<rect x="1205" y="789" width="4" height="3" fill="#f4b080"/>
<path d="M690.500 546V625H717.500V546M690.500 654V730M717.500 654V730M690.500 654H717.500M690 440H717.500V517.500H690Z" stroke="#ff2020" stroke-width="1.100" stroke-dasharray="1.500 1.500" fill="none"/>
<path d="M696 564V625M712 556V625M696 654V716M712 654V716" stroke="#0000ee" stroke-width="1.800" stroke-dasharray="3 1.500"/>
<path d="M930.500 329V365" stroke="#0000ee" stroke-width="2.200"/><path d="M919.500 326V364M943.500 326V352" stroke="#0000ee" stroke-width="1.500" stroke-dasharray="1.500 1.500"/>
<path d="M678.500 791V830M1215.500 791V828" stroke="#0000ee" stroke-width="2.200"/><path d="M665.500 814V832M690.500 791V832M1203 812V830M1228.500 791V830" stroke="#0000ee" stroke-width="1.500" stroke-dasharray="1.500 1.500"/>
<ellipse cx="771.5" cy="307.300" rx="4.200" ry="3.200" fill="#0a3f9a"/><rect x="770.5" y="306.300" width="2.500" height="1.800" fill="#7fa0e0"/><rect x="767.5" y="311.500" width="8" height="2" fill="#9ccaf0"/>
<ellipse cx="784.5" cy="307.300" rx="4.200" ry="3.200" fill="#0a3f9a"/><rect x="783.5" y="306.300" width="2.500" height="1.800" fill="#7fa0e0"/><rect x="780.5" y="311.500" width="8" height="2" fill="#9ccaf0"/>
<ellipse cx="808.5" cy="307.300" rx="4.200" ry="3.200" fill="#0a3f9a"/><rect x="807.5" y="306.300" width="2.500" height="1.800" fill="#7fa0e0"/><rect x="804.5" y="311.500" width="8" height="2" fill="#9ccaf0"/>
<ellipse cx="820.5" cy="307.300" rx="4.200" ry="3.200" fill="#0a3f9a"/><rect x="819.5" y="306.300" width="2.500" height="1.800" fill="#7fa0e0"/><rect x="816.5" y="311.500" width="8" height="2" fill="#9ccaf0"/>
<ellipse cx="832.5" cy="307.300" rx="4.200" ry="3.200" fill="#0a3f9a"/><rect x="831.5" y="306.300" width="2.500" height="1.800" fill="#7fa0e0"/><rect x="828.5" y="311.500" width="8" height="2" fill="#9ccaf0"/>
<ellipse cx="844.5" cy="307.300" rx="4.200" ry="3.200" fill="#0a3f9a"/><rect x="843.5" y="306.300" width="2.500" height="1.800" fill="#7fa0e0"/><rect x="840.5" y="311.500" width="8" height="2" fill="#9ccaf0"/>
<path d="M704.700 270V750.500H774.500V864" stroke="#70e8b0" stroke-width="1.200" fill="none"/><path d="M774 864.500H784" stroke="#70e8b0" stroke-width="2.200"/>
<circle cx="704.700" cy="262" r="5.300" fill="none" stroke="#70e8b0" stroke-width="1.300"/><path d="M697 262h15.500M704.700 254v9" stroke="#70e8b0" stroke-width="1.100"/><path d="M710.500 258.500l3.500 3.500-3.500 3.500" fill="none" stroke="#70e8b0" stroke-width="1.100"/>
<path d="M588.3 268V888M659.5 268V888M685.3 268V888M743 268V888M804.3 268V888M867.7 268V888M931.3 268V888M994.8 695V888M1058.5 695V888M1121.7 695V888M1226.6 695V888" stroke="#ff2020" stroke-width="1.250" stroke-dasharray="11.600 3.400 3 3.900" fill="none"/>
<rect x="864" y="428" width="72" height="265" fill="#fff"/>
<rect x="800" y="432" width="8" height="173" fill="url(#dk)"/>
<path d="M513 319.6H978M513 391.2H978M513 422.6H978M513 484H775M513 545.4H775M513 607H775M513 625.8H832M513 668H832M513 729.5H1252M513 761.5H1252M513 832.6H1252" stroke="#ff2020" stroke-width="1.250" stroke-dasharray="11.600 3.400 3 3.900" fill="none"/>
<path d="M751 422.600H946M751 729.800H1230" stroke="#ff2020" stroke-width="1.300"/>
<circle cx="588.3" cy="260.8" r="6.300" fill="#fff" stroke="#ff2020" stroke-width="1.300"/>
<text x="588.3" y="262.8" font-size="5.5" fill="#ff2020" text-anchor="middle" font-weight="bold">1</text>
<circle cx="588.3" cy="894.4" r="6.300" fill="#fff" stroke="#ff2020" stroke-width="1.300"/>
<text x="588.3" y="896.4" font-size="5.5" fill="#ff2020" text-anchor="middle" font-weight="bold">1</text>
<circle cx="659.5" cy="260.8" r="6.300" fill="#fff" stroke="#ff2020" stroke-width="1.300"/>
<text x="659.5" y="262.8" font-size="4.6" fill="#ff2020" text-anchor="middle" font-weight="bold">1.1</text>
<circle cx="659.5" cy="894.4" r="6.300" fill="#fff" stroke="#ff2020" stroke-width="1.300"/>
<text x="659.5" y="896.4" font-size="4.6" fill="#ff2020" text-anchor="middle" font-weight="bold">1.1</text>
<circle cx="685.3" cy="260.8" r="6.300" fill="#fff" stroke="#ff2020" stroke-width="1.300"/>
<text x="685.3" y="262.8" font-size="5.5" fill="#ff2020" text-anchor="middle" font-weight="bold">2</text>
<circle cx="685.3" cy="894.4" r="6.300" fill="#fff" stroke="#ff2020" stroke-width="1.300"/>
<text x="685.3" y="896.4" font-size="5.5" fill="#ff2020" text-anchor="middle" font-weight="bold">2</text>
<circle cx="743" cy="260.8" r="6.300" fill="#fff" stroke="#ff2020" stroke-width="1.300"/>
<text x="743" y="262.8" font-size="5.5" fill="#ff2020" text-anchor="middle" font-weight="bold">3</text>
<circle cx="743" cy="894.4" r="6.300" fill="#fff" stroke="#ff2020" stroke-width="1.300"/>
<text x="743" y="896.4" font-size="5.5" fill="#ff2020" text-anchor="middle" font-weight="bold">3</text>
<circle cx="804.3" cy="260.8" r="6.300" fill="#fff" stroke="#ff2020" stroke-width="1.300"/>
<text x="804.3" y="262.8" font-size="5.5" fill="#ff2020" text-anchor="middle" font-weight="bold">4</text>
<circle cx="804.3" cy="894.4" r="6.300" fill="#fff" stroke="#ff2020" stroke-width="1.300"/>
<text x="804.3" y="896.4" font-size="5.5" fill="#ff2020" text-anchor="middle" font-weight="bold">4</text>
<circle cx="867.7" cy="260.8" r="6.300" fill="#fff" stroke="#ff2020" stroke-width="1.300"/>
<text x="867.7" y="262.8" font-size="5.5" fill="#ff2020" text-anchor="middle" font-weight="bold">5</text>
<circle cx="867.7" cy="894.4" r="6.300" fill="#fff" stroke="#ff2020" stroke-width="1.300"/>
<text x="867.7" y="896.4" font-size="5.5" fill="#ff2020" text-anchor="middle" font-weight="bold">5</text>
<circle cx="931.3" cy="260.8" r="6.300" fill="#fff" stroke="#ff2020" stroke-width="1.300"/>
<text x="931.3" y="262.8" font-size="5.5" fill="#ff2020" text-anchor="middle" font-weight="bold">6</text>
<circle cx="931.3" cy="894.4" r="6.300" fill="#fff" stroke="#ff2020" stroke-width="1.300"/>
<text x="931.3" y="896.4" font-size="5.5" fill="#ff2020" text-anchor="middle" font-weight="bold">6</text>
<circle cx="994.8" cy="894.4" r="6.300" fill="#fff" stroke="#ff2020" stroke-width="1.300"/>
<text x="994.8" y="896.4" font-size="5.5" fill="#ff2020" text-anchor="middle" font-weight="bold">7</text>
<circle cx="1058.5" cy="894.4" r="6.300" fill="#fff" stroke="#ff2020" stroke-width="1.300"/>
<text x="1058.5" y="896.4" font-size="5.5" fill="#ff2020" text-anchor="middle" font-weight="bold">8</text>
<circle cx="1121.7" cy="894.4" r="6.300" fill="#fff" stroke="#ff2020" stroke-width="1.300"/>
<text x="1121.7" y="896.4" font-size="5.5" fill="#ff2020" text-anchor="middle" font-weight="bold">9</text>
<circle cx="1226.6" cy="894.4" r="6.300" fill="#fff" stroke="#ff2020" stroke-width="1.300"/>
<text x="1226.6" y="896.4" font-size="4.6" fill="#ff2020" text-anchor="middle" font-weight="bold">10</text>
<circle cx="505.8" cy="319.6" r="6.300" fill="#fff" stroke="#ff2020" stroke-width="1.300"/>
<text x="505.8" y="321.6" font-size="5.5" fill="#ff2020" text-anchor="middle" font-weight="bold">A</text>
<circle cx="505.8" cy="391.2" r="6.300" fill="#fff" stroke="#ff2020" stroke-width="1.300"/>
<text x="505.8" y="393.2" font-size="5.5" fill="#ff2020" text-anchor="middle" font-weight="bold">B</text>
<circle cx="505.8" cy="422.6" r="6.300" fill="#fff" stroke="#ff2020" stroke-width="1.300"/>
<text x="505.8" y="424.6" font-size="5.5" fill="#ff2020" text-anchor="middle" font-weight="bold">C</text>
<circle cx="505.8" cy="484" r="6.300" fill="#fff" stroke="#ff2020" stroke-width="1.300"/>
<text x="505.8" y="486" font-size="5.5" fill="#ff2020" text-anchor="middle" font-weight="bold">D</text>
<circle cx="505.8" cy="545.4" r="6.300" fill="#fff" stroke="#ff2020" stroke-width="1.300"/>
<text x="505.8" y="547.4" font-size="5.5" fill="#ff2020" text-anchor="middle" font-weight="bold">E</text>
<circle cx="505.8" cy="607" r="6.300" fill="#fff" stroke="#ff2020" stroke-width="1.300"/>
<text x="505.8" y="609" font-size="5.5" fill="#ff2020" text-anchor="middle" font-weight="bold">F</text>
<circle cx="505.8" cy="625.8" r="6.300" fill="#fff" stroke="#ff2020" stroke-width="1.300"/>
<text x="505.8" y="627.8" font-size="4.6" fill="#ff2020" text-anchor="middle" font-weight="bold">F.1</text>
<circle cx="505.8" cy="668" r="6.300" fill="#fff" stroke="#ff2020" stroke-width="1.300"/>
<text x="505.8" y="670" font-size="5.5" fill="#ff2020" text-anchor="middle" font-weight="bold">G</text>
<circle cx="505.8" cy="729.5" r="6.300" fill="#fff" stroke="#ff2020" stroke-width="1.300"/>
<text x="505.8" y="731.5" font-size="5.5" fill="#ff2020" text-anchor="middle" font-weight="bold">H</text>
<circle cx="505.8" cy="761.5" r="6.300" fill="#fff" stroke="#ff2020" stroke-width="1.300"/>
<text x="505.8" y="763.5" font-size="5.5" fill="#ff2020" text-anchor="middle" font-weight="bold">I</text>
<circle cx="505.8" cy="832.6" r="6.300" fill="#fff" stroke="#ff2020" stroke-width="1.300"/>
<text x="505.8" y="834.6" font-size="5.5" fill="#ff2020" text-anchor="middle" font-weight="bold">J</text>
<g fill="none" stroke="#b0a030" stroke-width="1"><circle cx="588.3" cy="319.6" r="1.600"/><circle cx="588.3" cy="391.2" r="1.600"/><circle cx="588.3" cy="422.6" r="1.600"/><circle cx="588.3" cy="484" r="1.600"/><circle cx="588.3" cy="545.4" r="1.600"/><circle cx="588.3" cy="607" r="1.600"/><circle cx="588.3" cy="668" r="1.600"/><circle cx="588.3" cy="729.5" r="1.600"/><circle cx="659.5" cy="319.6" r="1.600"/><circle cx="659.5" cy="391.2" r="1.600"/><circle cx="659.5" cy="422.6" r="1.600"/><circle cx="659.5" cy="484" r="1.600"/><circle cx="659.5" cy="545.4" r="1.600"/><circle cx="659.5" cy="607" r="1.600"/><circle cx="659.5" cy="668" r="1.600"/><circle cx="659.5" cy="729.5" r="1.600"/><circle cx="685.3" cy="319.6" r="1.600"/><circle cx="685.3" cy="391.2" r="1.600"/><circle cx="685.3" cy="422.6" r="1.600"/><circle cx="685.3" cy="484" r="1.600"/><circle cx="685.3" cy="545.4" r="1.600"/><circle cx="685.3" cy="607" r="1.600"/><circle cx="685.3" cy="668" r="1.600"/><circle cx="685.3" cy="729.5" r="1.600"/><circle cx="743" cy="319.6" r="1.600"/><circle cx="743" cy="391.2" r="1.600"/><circle cx="743" cy="422.6" r="1.600"/><circle cx="743" cy="484" r="1.600"/><circle cx="743" cy="545.4" r="1.600"/><circle cx="743" cy="607" r="1.600"/><circle cx="743" cy="668" r="1.600"/><circle cx="743" cy="729.5" r="1.600"/><circle cx="588.3" cy="761.5" r="1.600"/><circle cx="588.3" cy="832.6" r="1.600"/><circle cx="659.5" cy="832.6" r="1.600"/><circle cx="743" cy="832.6" r="1.600"/><circle cx="804.3" cy="319.6" r="1.600"/><circle cx="804.3" cy="391.2" r="1.600"/><circle cx="867.7" cy="391.2" r="1.600"/><circle cx="804.3" cy="625.8" r="1.600"/><circle cx="804.3" cy="668" r="1.600"/><circle cx="867.7" cy="761.5" r="1.600"/><circle cx="931.3" cy="761.5" r="1.600"/></g>
<path d="M519 404H581M519 404C545 440 552 490 523 536M523 536L519.500 541V549H581M579 404V549" stroke="#ff2020" stroke-width="1.400" stroke-dasharray="1.600 1.800" fill="none"/>
<circle cx="534" cy="423" r="2" fill="#c8c040" stroke="#8a8a20" stroke-width="1"/>
<circle cx="577" cy="423" r="2" fill="#c8c040" stroke="#8a8a20" stroke-width="1"/>
<circle cx="523" cy="527.5" r="2" fill="#c8c040" stroke="#8a8a20" stroke-width="1"/>
<circle cx="577" cy="527.5" r="2" fill="#c8c040" stroke="#8a8a20" stroke-width="1"/>
<circle cx="523" cy="545.5" r="2" fill="#c8c040" stroke="#8a8a20" stroke-width="1"/>
<circle cx="577" cy="545.5" r="2" fill="#c8c040" stroke="#8a8a20" stroke-width="1"/>
<path d="M483 434.300h17l34-9.500M500 434.300l41 11.200" stroke="#111" stroke-width="1.100" fill="none"/><path d="M448 431h27v4h8v5h-5v3h-3v3.500h-27z" fill="#000"/>
<rect x="636.5" y="343.0" width="18" height="4.500" fill="#ffff00"/>
<rect x="637.5" y="350.8" width="16" height="6.500" fill="none" stroke="#ffff00" stroke-width="1.100"/><rect x="641.0" y="352.0" width="7" height="4.200" fill="#ffff00"/>
<rect x="769.0" y="332.7" width="18" height="4.500" fill="#ffff00"/>
<rect x="770.0" y="340.5" width="16" height="6.500" fill="none" stroke="#ffff00" stroke-width="1.100"/><rect x="773.5" y="341.7" width="7" height="4.200" fill="#ffff00"/>
<rect x="816.6" y="340.0" width="20" height="4.500" fill="#ffff00"/>
<rect x="818.6" y="347.8" width="16" height="6.500" fill="none" stroke="#ffff00" stroke-width="1.100"/><rect x="822.1" y="349.0" width="7" height="4.200" fill="#ffff00"/>
<rect x="885.1" y="319.7" width="11" height="4.500" fill="#ffff00"/>
<rect x="882.6" y="327.5" width="16" height="6.500" fill="none" stroke="#ffff00" stroke-width="1.100"/><rect x="886.1" y="328.7" width="7" height="4.200" fill="#ffff00"/>
<rect x="896.2" y="350.5" width="13.5" height="4.500" fill="#ffff00"/>
<rect x="895.0" y="358.3" width="16" height="6.500" fill="none" stroke="#ffff00" stroke-width="1.100"/><rect x="898.5" y="359.5" width="7" height="4.200" fill="#ffff00"/>
<rect x="865.2" y="362.4" width="11.5" height="4.500" fill="#ffff00"/>
<rect x="863.0" y="370.2" width="16" height="6.500" fill="none" stroke="#ffff00" stroke-width="1.100"/><rect x="866.5" y="371.4" width="7" height="4.200" fill="#ffff00"/>
<rect x="768.8" y="376.0" width="19.5" height="4.500" fill="#ffff00"/>
<rect x="770.5" y="383.8" width="16" height="6.500" fill="none" stroke="#ffff00" stroke-width="1.100"/><rect x="774.0" y="385.0" width="7" height="4.200" fill="#ffff00"/>
<rect x="803.2" y="373.4" width="15.5" height="4.500" fill="#ffff00"/>
<rect x="803.0" y="381.2" width="16" height="6.500" fill="none" stroke="#ffff00" stroke-width="1.100"/><rect x="806.5" y="382.4" width="7" height="4.200" fill="#ffff00"/>
<rect x="892.0" y="376.0" width="10" height="4.500" fill="#ffff00"/>
<rect x="889.0" y="383.8" width="16" height="6.500" fill="none" stroke="#ffff00" stroke-width="1.100"/><rect x="892.5" y="385.0" width="7" height="4.200" fill="#ffff00"/>
<rect x="927.0" y="363.0" width="8" height="4.500" fill="#ffff00"/>
<rect x="923.0" y="370.8" width="16" height="6.500" fill="none" stroke="#ffff00" stroke-width="1.100"/><rect x="926.5" y="372.0" width="7" height="4.200" fill="#ffff00"/>
<rect x="829.5" y="399.4" width="14" height="4.500" fill="#ffff00"/>
<rect x="828.5" y="407.2" width="16" height="6.500" fill="none" stroke="#ffff00" stroke-width="1.100"/><rect x="832.0" y="408.4" width="7" height="4.200" fill="#ffff00"/>
<rect x="645.0" y="466.0" width="9" height="4.500" fill="#ffff00"/>
<rect x="641.5" y="473.8" width="16" height="6.500" fill="none" stroke="#ffff00" stroke-width="1.100"/><rect x="645.0" y="475.0" width="7" height="4.200" fill="#ffff00"/>
<rect x="725.0" y="498.0" width="10" height="4.500" fill="#ffff00"/>
<rect x="722.0" y="505.8" width="16" height="6.500" fill="none" stroke="#ffff00" stroke-width="1.100"/><rect x="725.5" y="507.0" width="7" height="4.200" fill="#ffff00"/>
<rect x="587.0" y="562.7" width="16" height="4.500" fill="#ffff00"/>
<rect x="587.0" y="570.5" width="16" height="6.500" fill="none" stroke="#ffff00" stroke-width="1.100"/><rect x="590.5" y="571.7" width="7" height="4.200" fill="#ffff00"/>
<rect x="625.0" y="561.7" width="17" height="4.500" fill="#ffff00"/>
<rect x="625.5" y="569.5" width="16" height="6.500" fill="none" stroke="#ffff00" stroke-width="1.100"/><rect x="629.0" y="570.7" width="7" height="4.200" fill="#ffff00"/>
<rect x="610.0" y="613.0" width="19" height="4.500" fill="#ffff00"/>
<rect x="611.5" y="620.8" width="16" height="6.500" fill="none" stroke="#ffff00" stroke-width="1.100"/><rect x="615.0" y="622.0" width="7" height="4.200" fill="#ffff00"/>
<rect x="612.0" y="663.0" width="21" height="4.500" fill="#ffff00"/>
<rect x="614.5" y="670.8" width="16" height="6.500" fill="none" stroke="#ffff00" stroke-width="1.100"/><rect x="618.0" y="672.0" width="7" height="4.200" fill="#ffff00"/>
<rect x="770.0" y="639.6" width="14" height="4.500" fill="#ffff00"/>
<rect x="769.0" y="647.4" width="16" height="6.500" fill="none" stroke="#ffff00" stroke-width="1.100"/><rect x="772.5" y="648.6" width="7" height="4.200" fill="#ffff00"/>
<rect x="614.0" y="745.0" width="19" height="4.500" fill="#ffff00"/>
<rect x="615.5" y="752.8" width="16" height="6.500" fill="none" stroke="#ffff00" stroke-width="1.100"/><rect x="619.0" y="754.0" width="7" height="4.200" fill="#ffff00"/>
<rect x="673.0" y="775.4" width="8" height="4.500" fill="#ffff00"/>
<rect x="669.0" y="783.2" width="16" height="6.500" fill="none" stroke="#ffff00" stroke-width="1.100"/><rect x="672.5" y="784.4" width="7" height="4.200" fill="#ffff00"/>
<rect x="722.1" y="762.5" width="17" height="4.500" fill="#ffff00"/>
<rect x="722.6" y="770.3" width="16" height="6.500" fill="none" stroke="#ffff00" stroke-width="1.100"/><rect x="726.1" y="771.5" width="7" height="4.200" fill="#ffff00"/>
<rect x="712.0" y="798.0" width="14" height="4.500" fill="#ffff00"/>
<rect x="711.0" y="805.8" width="16" height="6.500" fill="none" stroke="#ffff00" stroke-width="1.100"/><rect x="714.5" y="807.0" width="7" height="4.200" fill="#ffff00"/>
<rect x="757.0" y="798.0" width="8" height="4.500" fill="#ffff00"/>
<rect x="753.0" y="805.8" width="16" height="6.500" fill="none" stroke="#ffff00" stroke-width="1.100"/><rect x="756.5" y="807.0" width="7" height="4.200" fill="#ffff00"/>
<rect x="781.8" y="798.0" width="14" height="4.500" fill="#ffff00"/>
<rect x="780.8" y="805.8" width="16" height="6.500" fill="none" stroke="#ffff00" stroke-width="1.100"/><rect x="784.3" y="807.0" width="7" height="4.200" fill="#ffff00"/>
<rect x="885.0" y="737.0" width="14" height="4.500" fill="#ffff00"/>
<rect x="884.0" y="744.8" width="16" height="6.500" fill="none" stroke="#ffff00" stroke-width="1.100"/><rect x="887.5" y="746.0" width="7" height="4.200" fill="#ffff00"/>
<rect x="847.0" y="790.0" width="19" height="4.500" fill="#ffff00"/>
<rect x="848.5" y="797.8" width="16" height="6.500" fill="none" stroke="#ffff00" stroke-width="1.100"/><rect x="852.0" y="799.0" width="7" height="4.200" fill="#ffff00"/>
<rect x="927.0" y="790.0" width="19" height="4.500" fill="#ffff00"/>
<rect x="928.5" y="797.8" width="16" height="6.500" fill="none" stroke="#ffff00" stroke-width="1.100"/><rect x="932.0" y="799.0" width="7" height="4.200" fill="#ffff00"/>
<rect x="1016.0" y="790.0" width="19" height="4.500" fill="#ffff00"/>
<rect x="1017.5" y="797.8" width="16" height="6.500" fill="none" stroke="#ffff00" stroke-width="1.100"/><rect x="1021.0" y="799.0" width="7" height="4.200" fill="#ffff00"/>
<rect x="1108.0" y="790.0" width="19" height="4.500" fill="#ffff00"/>
<rect x="1109.5" y="797.8" width="16" height="6.500" fill="none" stroke="#ffff00" stroke-width="1.100"/><rect x="1113.0" y="799.0" width="7" height="4.200" fill="#ffff00"/>
<rect x="1159.0" y="790.0" width="21" height="4.500" fill="#ffff00"/>
<rect x="1161.5" y="797.8" width="16" height="6.500" fill="none" stroke="#ffff00" stroke-width="1.100"/><rect x="1165.0" y="799.0" width="7" height="4.200" fill="#ffff00"/>
<rect x="1213.0" y="773.0" width="8" height="4.500" fill="#ffff00"/>
<rect x="1209.0" y="780.8" width="16" height="6.500" fill="none" stroke="#ffff00" stroke-width="1.100"/><rect x="1212.5" y="782.0" width="7" height="4.200" fill="#ffff00"/>
<path d="M588 275.500H931.500M588 285.500H931.500M743 292.800H946M588 271V290M659.500 280V290M685.500 280V290M743 280V313M804.300 280V296M867.700 280V296M931.300 271V296M946 288V313" stroke="#ff80ff" stroke-width="1.100" fill="none"/>
<path d="M767 289V313M776 289V313M780 289V313M789 289V313M804 289V313M813 289V313M816 289V313M825 289V313M828 289V313M837 289V313M840 289V313M849 289V313" stroke="#ff80ff" stroke-width="1"/>
<rect x="754" y="268.5" width="12" height="3" fill="#ff80ff"/>
<rect x="619" y="279" width="9" height="3" fill="#ff80ff"/>
<rect x="667" y="279" width="9" height="3" fill="#ff80ff"/>
<rect x="709" y="279" width="9" height="3" fill="#ff80ff"/>
<rect x="768" y="279" width="9" height="3" fill="#ff80ff"/>
<rect x="829" y="279" width="9" height="3" fill="#ff80ff"/>
<rect x="893" y="279" width="9" height="3" fill="#ff80ff"/>
<rect x="750" y="287" width="7" height="3" fill="#ff80ff"/>
<rect x="766" y="287" width="6" height="3" fill="#ff80ff"/>
<rect x="779" y="287" width="6" height="3" fill="#ff80ff"/>
<rect x="791" y="287" width="8" height="3" fill="#ff80ff"/>
<rect x="805" y="287" width="5" height="3" fill="#ff80ff"/>
<rect x="811" y="287" width="5" height="3" fill="#ff80ff"/>
<rect x="817" y="287" width="5" height="3" fill="#ff80ff"/>
<rect x="823" y="287" width="5" height="3" fill="#ff80ff"/>
<rect x="829" y="287" width="5" height="3" fill="#ff80ff"/>
<rect x="835" y="287" width="5" height="3" fill="#ff80ff"/>
<rect x="841" y="287" width="5" height="3" fill="#ff80ff"/>
<rect x="892" y="287" width="8" height="3" fill="#ff80ff"/>
<rect x="779" y="295" width="6" height="3" fill="#ff80ff"/>
<path d="M736 344.5l5-5 5 5-5 5z" fill="none" stroke="#ff80ff" stroke-width="1.100"/><rect x="739" y="342.5" width="4" height="4" fill="#ff80ff"/><path d="M746 344.5h13" stroke="#ff80ff" stroke-width="1.100"/>
<path d="M833 329.5l5-5 5 5-5 5z" fill="none" stroke="#ff80ff" stroke-width="1.100"/><rect x="836" y="327.5" width="4" height="4" fill="#ff80ff"/><path d="M843 329.5h13" stroke="#ff80ff" stroke-width="1.100"/>
<rect x="927" y="315" width="8" height="3.500" fill="#ff80ff"/><rect x="927" y="322" width="8" height="3" fill="#ff80ff"/><path d="M916 320.500h30" stroke="#ff80ff" stroke-width="1"/>
<rect x="446.500" y="962.500" width="101.500" height="14.500" rx="2" fill="#6a6a6a"/>
<text x="448.500" y="974" font-family="Liberation Mono, monospace" font-size="11.800" fill="#ffffff" textLength="97" lengthAdjust="spacingAndGlyphs">Command: _PLOT</text>
<rect x="384.500" y="980" width="1144" height="26" rx="2" fill="#fbfbfb"/>
<rect x="384.500" y="980" width="56" height="26" fill="#454c5a"/>
<rect x="440" y="1002" width="1088" height="4" fill="#d4dcea"/>
<path d="M1528.500 980v26M440 980.500h1088.500" stroke="#555c68" stroke-width="1"/>
<rect x="388.500" y="984" width="1.500" height="1.500" fill="#c8c8c8"/><rect x="391.500" y="984" width="1.500" height="1.500" fill="#c8c8c8"/>
<rect x="388.500" y="987" width="1.500" height="1.500" fill="#c8c8c8"/><rect x="391.500" y="987" width="1.500" height="1.500" fill="#c8c8c8"/>
<rect x="388.500" y="990" width="1.500" height="1.500" fill="#c8c8c8"/><rect x="391.500" y="990" width="1.500" height="1.500" fill="#c8c8c8"/>
<rect x="388.500" y="993" width="1.500" height="1.500" fill="#c8c8c8"/><rect x="391.500" y="993" width="1.500" height="1.500" fill="#c8c8c8"/>
<rect x="388.500" y="996" width="1.500" height="1.500" fill="#c8c8c8"/><rect x="391.500" y="996" width="1.500" height="1.500" fill="#c8c8c8"/>
<rect x="388.500" y="999" width="1.500" height="1.500" fill="#c8c8c8"/><rect x="391.500" y="999" width="1.500" height="1.500" fill="#c8c8c8"/>
<rect x="388.500" y="1002" width="1.500" height="1.500" fill="#c8c8c8"/><rect x="391.500" y="1002" width="1.500" height="1.500" fill="#c8c8c8"/>
<path d="M399 988l8 8M407 988l-8 8" stroke="#e0e0e0" stroke-width="1.800"/>
<path d="M421 999.500l6.500-7" stroke="#e0e0e0" stroke-width="2.200"/><path d="M426 990.500a3.500 3.500 0 0 1 5.500-3l-2.500 2.500 1.500 2 2.500-2.500a3.500 3.500 0 0 1-4.500 4.500z" fill="#e0e0e0"/>
<rect x="445.500" y="988.500" width="13" height="10" fill="#fbfbfb" stroke="#666" stroke-width="1"/><rect x="445.500" y="988.500" width="13" height="2.500" fill="#999"/><path d="M448 993.500l2 1.500-2 1.500M451 997h3" stroke="#444" stroke-width="0.800" fill="none"/><path d="M462 992h7l-3.500 4z" fill="#666"/>
<text x="476.500" y="997" font-family="Liberation Mono, monospace" font-size="11.500" font-style="italic" fill="#8a8a8a" textLength="97" lengthAdjust="spacingAndGlyphs">Type a command</text>
<path d="M1517.500 995h8l-4-4.500z" fill="#8a8a8a"/>
<path d="M18.500 905V990.500H68.500z" fill="none" stroke="#1030ff" stroke-width="1.200"/><path d="M18.500 982.500h8v8" fill="none" stroke="#1030ff" stroke-width="1.200"/>
<path d="M20 930l6.500 6.500 7-7M26.500 936.500v6" stroke="#1030ff" stroke-width="1.200" fill="none"/><path d="M46 976l12.500 13M59 976l-13 13" stroke="#1030ff" stroke-width="1.200"/>
<path d="M263 512.500h45M315 512.500h45M311.500 464v45M311.500 516v45" stroke="#1a1a1a" stroke-width="1"/><rect x="308.500" y="509.500" width="6" height="6" fill="none" stroke="#1a1a1a" stroke-width="1"/>
<rect x="1872.500" y="207.500" width="34" height="134" rx="4" fill="#a0a0a0" stroke="#707070" stroke-width="1.200"/>
<path d="M1874 217.500h31M1876 254.500h27" stroke="#929292" stroke-width="1"/>
<circle cx="1900" cy="213.500" r="3" fill="#b4b4b4" stroke="#8c8c8c"/><path d="M1898.500 212l3 3M1901.500 212l-3 3" stroke="#909090" stroke-width="0.800"/>
<circle cx="1900" cy="335" r="3" fill="#b4b4b4" stroke="#8c8c8c"/><path d="M1898 335h4" stroke="#8c8c8c"/>
<path d="M1879 238c-1.500-8 4-9 9-9h8v9c0 6-5 9-9 9-4 .500-7-3-8-9z" fill="none" stroke="#8c8c8c" stroke-width="1.200"/><circle cx="1887" cy="238" r="4.500" fill="none" stroke="#8c8c8c" stroke-width="1.200"/><path d="M1890.500 241.500l4 4" stroke="#8c8c8c" stroke-width="1.200"/>
<text x="1890" y="250.5" font-size="8" fill="#8fa8cc" textLength="11" lengthAdjust="spacingAndGlyphs" font-weight="bold">2D</text>
<path d="M1880 272c-1-3 2-4 3-1l1.500 4v-10c0-2 2.500-2 2.500 0v-3c0-2 2.500-2 2.500 0v2.500c0-2 2.500-2 2.500 0v3c0-2 2.500-2 2.500 0v7c0 6-3 8-7 8s-5-3-8-10z" fill="none" stroke="#8c8c8c" stroke-width="1.200"/>
<path d="M1879 290l13 13M1893 290l-13 13M1879 290v4M1879 290h4M1893 290v4M1893 290h-4M1879.500 303v-4M1879.500 303h4" stroke="#8c8c8c" stroke-width="1.200" fill="none"/><circle cx="1893.500" cy="303" r="4" fill="#a4a4a4" stroke="#8c8c8c" stroke-width="1.200"/><path d="M1896.500 306l4 4" stroke="#8c8c8c" stroke-width="2"/>
<path d="M1888 317.500h5l-2.500 3z" fill="#909090"/>
<rect x="1848" y="196" width="12" height="5" fill="#555" /><rect x="1849" y="197" width="10" height="3" fill="#f4f4f4"/>
<rect x="1868.500" y="193.500" width="8" height="8" fill="#555" stroke="#f4f4f4" stroke-width="1.600"/><path d="M1871.500 193v-2.500h8.500v8.500h-2.500" fill="none" stroke="#f4f4f4" stroke-width="1.400"/>
<path d="M1889.500 192l8.500 8.500M1898 192l-8.500 8.500" stroke="#444" stroke-width="4"/><path d="M1889.500 192l8.500 8.500M1898 192l-8.500 8.500" stroke="#f4f4f4" stroke-width="2"/>
</g></svg>
<svg class="abs" style="left:0;top:0" width="1914" height="1040" viewBox="0 0 1914 1040" font-family="Liberation Sans, sans-serif">
<path d="M20 177c4 0 5-3 6-9l1.500-8c.6-3 2-5 6-5H139.500c4 0 5 2 5.600 5l1.500 8c1 6 2 9 6 9z" fill="#2e3542"/>
<path d="M146 181c4 0 5-7 6-13l1.500-8c.6-3 2-5 6-5H263c4 0 5 2 5.600 5l1.500 8c1 6 2 13 6 13z" fill="#3d4556"/>
<path d="M277 168c-1-6 0-10 6-10h9c4 0 5 2 5.500 4l1 5c1 5-1 9-6 9h-8c-5 0-7-3-7.500-8z" fill="#2e3542"/>
<text x="34" y="171" font-size="12" fill="#c8ccd2" textLength="24" lengthAdjust="spacingAndGlyphs" >Start</text>
<text x="157" y="171" font-size="12" fill="#ffffff" textLength="20" lengthAdjust="spacingAndGlyphs" font-weight="bold">A1*</text>
<path d="M248.500 161.500l8 8M256.500 161.500l-8 8" stroke="#b8bcc4" stroke-width="1.700"/>
<path d="M283 166.500h9M287.500 162v9" stroke="#b8bcc4" stroke-width="1.800"/>
<rect x="0" y="1007" width="1914" height="31" fill="#222933"/>
<path d="M12 1007.500h57l-4 15c-.5 1.500-1 2-2.500 2H22c-2 0-3-1-3.500-2.500z" fill="#2b323f"/>
<path d="M68 1007.500h73l-5 15c-.5 1.500-1 2-2.500 2H78c-2 0-3-1-3.500-2.500z" fill="#3b4453"/>
<path d="M139 1007.500h65l-4.500 15c-.5 1.500-1 2-2.500 2H148c-2 0-3-1-3.500-2.500z" fill="#2b323f"/>
<path d="M209 1010c0-1.500 1-2.500 3-2.500h14c2 0 3 1 3 3l-1 10c-.3 2.500-1.500 3.500-4 3.500h-10c-2 0-3.500-1-4-3.500z" fill="#2b323f"/>
<text x="25.5" y="1020" font-size="12" fill="#c8ccd2" textLength="33.5" lengthAdjust="spacingAndGlyphs" >Model</text>
<text x="82" y="1020" font-size="12" fill="#ffffff" textLength="43" lengthAdjust="spacingAndGlyphs" font-weight="bold">Layout1</text>
<text x="149" y="1020" font-size="12" fill="#c8ccd2" textLength="42" lengthAdjust="spacingAndGlyphs" >Layout2</text>
<path d="M213.500 1016h8.500M217.800 1011.800v8.500" stroke="#c0c4cc" stroke-width="1.800"/>
<rect x="1450" y="1009" width="40" height="23.500" fill="#394251"/>
<rect x="1492.5" y="1009" width="169.5" height="23.500" fill="#394251"/>
<rect x="1664.5" y="1009" width="72.5" height="23.500" fill="#394251"/>
<rect x="1739.5" y="1009" width="40.5" height="23.500" fill="#394251"/>
<rect x="1781" y="1009" width="24" height="23.500" fill="#394251"/>
<rect x="1807.5" y="1009" width="24.5" height="23.500" fill="#394251"/>
<rect x="1835" y="1009" width="22" height="23.500" fill="#394251"/>
<rect x="1859.5" y="1009" width="48.5" height="23.500" fill="#394251"/>
<text x="1453" y="1025" font-size="12" fill="#f0f0f0" textLength="34.5" lengthAdjust="spacingAndGlyphs" >PAPER</text>
<path d="M1497.500 1014v14h15M1497.500 1022.500h5.500v5.500" stroke="#e4e4e4" stroke-width="1.200" fill="none"/>
<rect x="1518" y="1009" width="22" height="23.500" fill="#5b8ed0"/>
<circle cx="1528" cy="1021.500" r="5.800" fill="none" stroke="#e4e4e4" stroke-width="1.300"/><path d="M1528 1021.500h9.500M1528 1021.500l8-7" stroke="#e4e4e4" stroke-width="1.300"/>
<path d="M1545.5 1019.0h7l-3.5 4z" fill="#d8d8d8"/>
<path d="M1568.500 1013v16" stroke="#40c060" stroke-width="1.200"/><path d="M1562 1014.500l13 13" stroke="#e05050" stroke-width="1.200"/><circle cx="1568.500" cy="1021" r="1.500" fill="#fff"/>
<path d="M1585.5 1019.0h7l-3.5 4z" fill="#d8d8d8"/>
<rect x="1598.500" y="1009" width="22.500" height="23.500" fill="#5b8ed0"/><rect x="1623" y="1009" width="22" height="23.500" fill="#5b8ed0"/>
<path d="M1602 1027.500h16M1604 1027l12-12" stroke="#e4e4e4" stroke-width="1.400" fill="none"/>
<rect x="1628.500" y="1015.500" width="13" height="12" fill="none" stroke="#e4e4e4" stroke-width="1.300"/><rect x="1626.500" y="1013.500" width="4" height="4" fill="#5b8ed0" stroke="#e4e4e4" stroke-width="1"/>
<path d="M1650.5 1019.0h7l-3.5 4z" fill="#d8d8d8"/>
<rect x="1670.500" y="1014.500" width="13" height="13" fill="none" stroke="#e4e4e4" stroke-width="1.200" stroke-dasharray="3 2"/><rect x="1675.500" y="1019.500" width="6" height="6" fill="none" stroke="#e4e4e4" stroke-width="1"/><path d="M1670 1014l4 4" stroke="#e4e4e4"/>
<path d="M1700 1013l2.500 8 4.500 7-7-4-7 4 4.500-7z" fill="#e4e4e4"/>
<path d="M1724 1013l2.500 8 4.500 7-7-4-7 4 4.500-7z" fill="#e4e4e4"/>
<circle cx="1707.500" cy="1016" r="2" fill="none" stroke="#e4e4e4" stroke-width="1"/><path d="M1731 1013l-2 3.500h2l-1.500 3.500" stroke="#e4e4e4" stroke-width="1" fill="none"/>
<circle cx="1751.500" cy="1020.500" r="4.800" fill="none" stroke="#e4e4e4" stroke-width="3.600"/><circle cx="1751.500" cy="1020.500" r="7" fill="none" stroke="#e4e4e4" stroke-width="2.400" stroke-dasharray="2.750 2.750"/>
<path d="M1768.0 1019.0h7l-3.5 4z" fill="#d8d8d8"/>
<path d="M1785 1020.500h16M1793 1012.500v16" stroke="#e4e4e4" stroke-width="1.600"/>
<rect x="1812.500" y="1013.500" width="5" height="5" fill="none" stroke="#e4e4e4" stroke-width="1"/><circle cx="1825" cy="1019.500" r="2.800" fill="none" stroke="#e4e4e4" stroke-width="1"/><path d="M1815 1028.500l3-5.500 3 5.500z" fill="none" stroke="#e4e4e4" stroke-width="1"/>
<path d="M1838 1014h12l3 3v10h-15z" fill="#4a90d8"/><rect x="1838" y="1022" width="8" height="5.500" fill="#f0b840"/><path d="M1841.500 1013v9M1838 1016.500h8" stroke="#fff" stroke-width="1"/><path d="M1845 1023l3 3 6-6" stroke="#40c060" stroke-width="2" fill="none"/>
<rect x="1864.500" y="1015.500" width="14" height="10.500" fill="none" stroke="#e4e4e4" stroke-width="1.200"/><path d="M1867 1023.500l3-3M1867 1021v2.500h2.500M1876 1018l-3 3M1873.500 1018h2.500v2.500" stroke="#e4e4e4" stroke-width="1" fill="none"/>
<path d="M1888 1015h16M1888 1021h16M1888 1027h16" stroke="#e4e4e4" stroke-width="1.800"/>
</svg>
<div class="abs" id="rightline"></div>
<div class="abs" id="botline"></div>
</div></body></html>
